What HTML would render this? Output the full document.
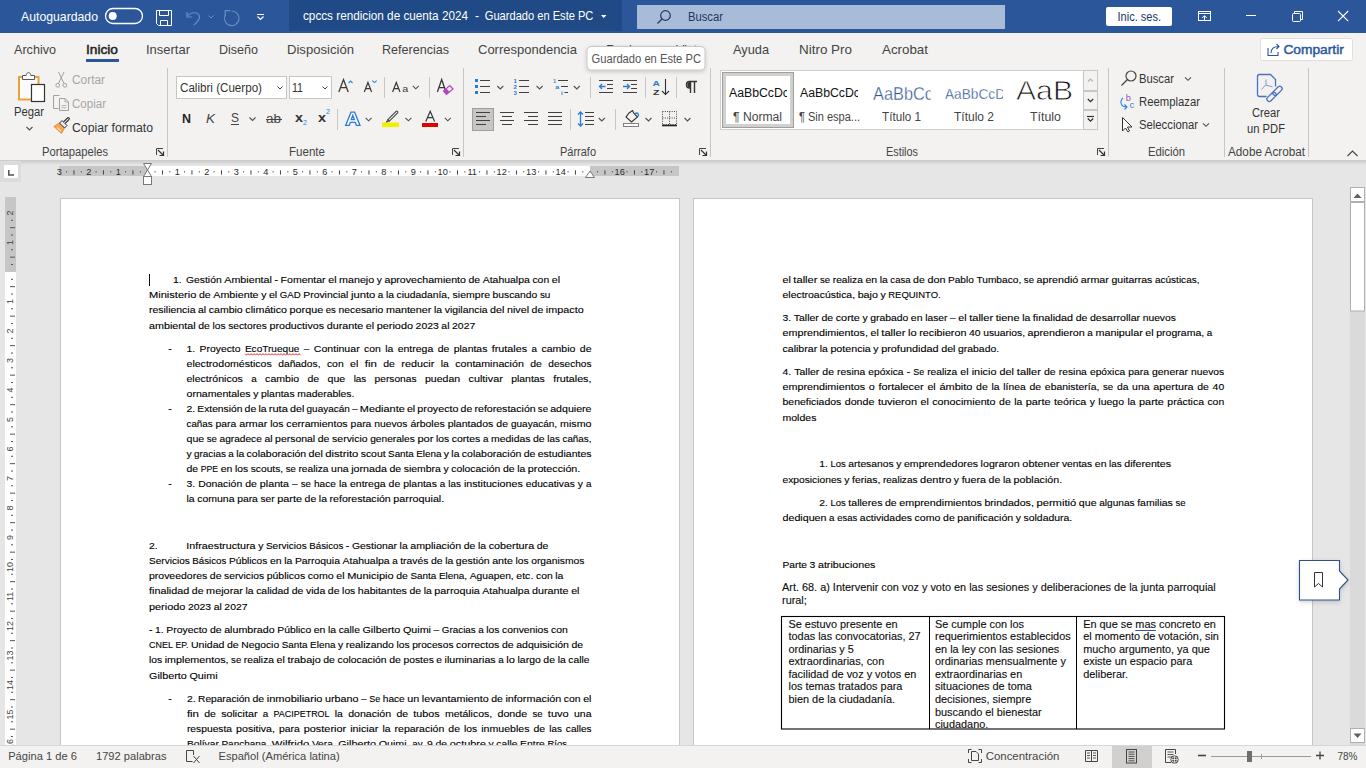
<!DOCTYPE html>
<html><head><meta charset="utf-8"><title>Word</title>
<style>html,body{margin:0;padding:0;width:1366px;height:768px;overflow:hidden;background:#e6e6e6}
svg{display:block;font-family:"Liberation Sans",sans-serif}</style></head>
<body><svg width="1366" height="768" viewBox="0 0 1366 768">
<rect x="0" y="0" width="1366" height="33" fill="#2b579a" />
<text x="21" y="21" font-size="13" fill="#fff" textLength="77" lengthAdjust="spacingAndGlyphs" >Autoguardado</text>
<rect x="105.5" y="8.5" width="37" height="15" rx="7.5" fill="none" stroke="#fff" stroke-width="1.3"/>
<circle cx="112.7" cy="16" r="4" fill="#fff"/>
<path d="M156.5 10.5 H171.5 V25.5 H158.5 L156.5 23.5 Z" stroke="#fff" fill="none" stroke-width="1" />
<path d="M159.5 10.5 V15.5 H168.5 V10.5" stroke="#fff" fill="none" stroke-width="1" />
<path d="M160.5 25.5 V20.5 H167.5 V25.5" stroke="#fff" fill="none" stroke-width="1" />
<path d="M187 12 V17 H192" stroke="#6a8cc0" fill="none" stroke-width="1.2" />
<path d="M187.5 16.5 C190 12 198 11 199.5 16.5 C200 20 196 23 194 25" stroke="#6a8cc0" fill="none" stroke-width="1.2" />
<path d="M208.5 15.5 L211 18 L213.5 15.5" stroke="#6a8cc0" fill="none" stroke-width="1" />
<path d="M231.7 11 A7.3 7.3 0 1 1 225.5 14.5" stroke="#6a8cc0" fill="none" stroke-width="1.2" />
<path d="M225.2 16 V10.6 H230.4" stroke="#6a8cc0" fill="none" stroke-width="1.2" />
<line x1="257" y1="14.5" x2="264" y2="14.5" stroke="#fff" stroke-width="1" />
<path d="M257.5 16.5 L260.5 19.5 L263.5 16.5" stroke="#fff" fill="none" stroke-width="1.2" />
<rect x="289" y="0" width="333" height="31" fill="#1f4a85" />
<text x="303" y="20" font-size="13" fill="#fff" textLength="165" lengthAdjust="spacingAndGlyphs" >cpccs rendicion de cuenta 2024</text>
<text x="475" y="20" font-size="13" fill="#fff" textLength="4" lengthAdjust="spacingAndGlyphs" >-</text>
<text x="484.8" y="20" font-size="13" fill="#fff" textLength="108.6" lengthAdjust="spacingAndGlyphs" >Guardado en Este PC</text>
<path d="M601 15 H606.5 L603.75 18 Z" stroke="none" fill="#fff" stroke-width="1" />
<rect x="637" y="5" width="368" height="24" fill="#a8bcd8" />
<circle cx="665.5" cy="15.5" r="4.8" fill="none" stroke="#1f3763" stroke-width="1.2"/>
<line x1="662" y1="19" x2="657.5" y2="23.5" stroke="#1f3763" stroke-width="1.3" />
<text x="688" y="21" font-size="12" fill="#1f3763" textLength="35" lengthAdjust="spacingAndGlyphs" >Buscar</text>
<rect x="1106" y="7" width="66" height="19" rx="2" fill="#fff"/>
<text x="1117.5" y="21" font-size="12" fill="#203864" textLength="43.5" lengthAdjust="spacingAndGlyphs" >Inic. ses.</text>
<rect x="1198.5" y="11.5" width="12" height="9" fill="none" stroke="#fff" stroke-width="1"/>
<line x1="1198.5" y1="13.5" x2="1210.5" y2="13.5" stroke="#fff" stroke-width="1" />
<path d="M1204.5 20.5 V15.8 M1202.2 18 L1204.5 15.7 L1206.8 18" stroke="#fff" fill="none" stroke-width="1" />
<line x1="1246" y1="15.5" x2="1256" y2="15.5" stroke="#fff" stroke-width="1" />
<rect x="1292.5" y="13.5" width="8" height="8" rx="1" fill="none" stroke="#fff" stroke-width="1"/>
<path d="M1294.5 13.5 V11.5 H1302.5 V19.5 H1300.5" stroke="#fff" fill="none" stroke-width="1" />
<path d="M1338 11 L1348.2 21.2 M1348.2 11 L1338 21.2" stroke="#fff" fill="none" stroke-width="1.1" />
<rect x="0" y="33" width="1366" height="127" fill="#f3f2f1" />
<text x="14" y="54" font-size="13" fill="#444" textLength="42" lengthAdjust="spacingAndGlyphs" >Archivo</text>
<text x="86" y="54" font-size="13" fill="#262626" textLength="32" lengthAdjust="spacingAndGlyphs" stroke="#262626" stroke-width="0.5">Inicio</text>
<text x="146" y="54" font-size="13" fill="#444" textLength="44" lengthAdjust="spacingAndGlyphs" >Insertar</text>
<text x="219" y="54" font-size="13" fill="#444" textLength="39" lengthAdjust="spacingAndGlyphs" >Diseño</text>
<text x="287" y="54" font-size="13" fill="#444" textLength="67" lengthAdjust="spacingAndGlyphs" >Disposición</text>
<text x="382" y="54" font-size="13" fill="#444" textLength="67" lengthAdjust="spacingAndGlyphs" >Referencias</text>
<text x="478" y="54" font-size="13" fill="#444" textLength="99" lengthAdjust="spacingAndGlyphs" >Correspondencia</text>
<text x="606" y="54" font-size="13" fill="#444" textLength="44" lengthAdjust="spacingAndGlyphs" >Revisar</text>
<text x="676" y="54" font-size="13" fill="#444" textLength="28" lengthAdjust="spacingAndGlyphs" >Vista</text>
<text x="733" y="54" font-size="13" fill="#444" textLength="36" lengthAdjust="spacingAndGlyphs" >Ayuda</text>
<text x="799" y="54" font-size="13" fill="#444" textLength="53" lengthAdjust="spacingAndGlyphs" >Nitro Pro</text>
<text x="882" y="54" font-size="13" fill="#444" textLength="46" lengthAdjust="spacingAndGlyphs" >Acrobat</text>
<rect x="86" y="59" width="33" height="3" fill="#2b579a" />
<rect x="1260.5" y="38.5" width="92" height="22" rx="2" fill="#fff" stroke="#e1dfdd"/>
<path d="M1268 48 V55.5 H1278 V52" stroke="#2b579a" fill="none" stroke-width="1.1" />
<path d="M1271 53 C1271 48 1274 46.5 1279 46.5 M1276.5 44 L1279 46.5 L1276.5 49" stroke="#2b579a" fill="none" stroke-width="1.1" />
<text x="1283.4" y="53.5" font-size="12.8" fill="#2b579a" textLength="60.4" lengthAdjust="spacingAndGlyphs" stroke="#2b579a" stroke-width="0.45">Compartir</text>
<defs><filter id="sh" x="-20%" y="-40%" width="140%" height="180%"><feDropShadow dx="0" dy="1.5" stdDeviation="2" flood-color="#000" flood-opacity="0.18"/></filter></defs>
<rect x="587" y="46.5" width="118" height="23.5" rx="4" fill="#fff" stroke="#c8c8c8" stroke-width="1" filter="url(#sh)"/>
<text x="591.5" y="63" font-size="12" fill="#555" textLength="109.5" lengthAdjust="spacingAndGlyphs" >Guardado en Este PC</text>
<line x1="167.5" y1="68" x2="167.5" y2="157" stroke="#c8c6c4" stroke-width="1" />
<line x1="463.5" y1="68" x2="463.5" y2="157" stroke="#c8c6c4" stroke-width="1" />
<line x1="710.5" y1="68" x2="710.5" y2="157" stroke="#c8c6c4" stroke-width="1" />
<line x1="1108.5" y1="68" x2="1108.5" y2="157" stroke="#c8c6c4" stroke-width="1" />
<line x1="1224.5" y1="68" x2="1224.5" y2="157" stroke="#c8c6c4" stroke-width="1" />
<line x1="1308.5" y1="68" x2="1308.5" y2="157" stroke="#c8c6c4" stroke-width="1" />
<text x="42" y="156" font-size="12" fill="#444" textLength="66" lengthAdjust="spacingAndGlyphs" >Portapapeles</text>
<text x="289" y="156" font-size="12" fill="#444" textLength="36" lengthAdjust="spacingAndGlyphs" >Fuente</text>
<text x="560" y="156" font-size="12" fill="#444" textLength="36" lengthAdjust="spacingAndGlyphs" >Párrafo</text>
<text x="886" y="156" font-size="12" fill="#444" textLength="32" lengthAdjust="spacingAndGlyphs" >Estilos</text>
<text x="1148" y="156" font-size="12" fill="#444" textLength="37" lengthAdjust="spacingAndGlyphs" >Edición</text>
<text x="1228" y="156" font-size="12" fill="#444" textLength="77" lengthAdjust="spacingAndGlyphs" >Adobe Acrobat</text>
<path d="M156.5 155 V148.5 H163" stroke="#444" fill="none" stroke-width="1" />
<path d="M158 150 L163 155 M163.5 151.5 V155.5 H159.5" stroke="#333" fill="none" stroke-width="1.2" />
<path d="M452.5 155 V148.5 H459" stroke="#444" fill="none" stroke-width="1" />
<path d="M454 150 L459 155 M459.5 151.5 V155.5 H455.5" stroke="#333" fill="none" stroke-width="1.2" />
<path d="M699.5 155 V148.5 H706" stroke="#444" fill="none" stroke-width="1" />
<path d="M701 150 L706 155 M706.5 151.5 V155.5 H702.5" stroke="#333" fill="none" stroke-width="1.2" />
<path d="M1097.5 155 V148.5 H1104" stroke="#444" fill="none" stroke-width="1" />
<path d="M1099 150 L1104 155 M1104.5 151.5 V155.5 H1100.5" stroke="#333" fill="none" stroke-width="1.2" />
<rect x="19" y="77" width="19.5" height="22.5" fill="#fbfbfb" stroke="#eba13a" stroke-width="2"/>
<path d="M22.5 79.5 V75.5 H26.2 C26.2 71.8 30.8 71.8 30.8 75.5 H34.5 V79.5 Z" stroke="#555" fill="#fff" stroke-width="1" />
<rect x="31.5" y="84.5" width="13" height="17" fill="#fff" stroke="#333" stroke-width="1.2"/>
<text x="14" y="116.4" font-size="12.5" fill="#333" textLength="30" lengthAdjust="spacingAndGlyphs" >Pegar</text>
<path d="M26.5 127 L29.5 130 L32.5 127" stroke="#505050" fill="none" stroke-width="1.1" />
<path d="M58.5 72 L64 83.5 M64 72 L58.5 83.5" stroke="#a0a0a0" fill="none" stroke-width="1" />
<circle cx="57.8" cy="85.3" r="1.9" fill="none" stroke="#a0a0a0"/><circle cx="64.8" cy="85.3" r="1.9" fill="none" stroke="#a0a0a0"/>
<text x="72" y="84" font-size="12" fill="#a6a6a6" textLength="33" lengthAdjust="spacingAndGlyphs" >Cortar</text>
<path d="M59.5 95.5 H53.5 V108.5 H58.5" stroke="#a0a0a0" fill="none" stroke-width="1" />
<path d="M59.5 98.5 H65 L68.5 102 V110.5 H59.5 Z" stroke="#a0a0a0" fill="none" stroke-width="1" />
<path d="M65 98.5 V102 H68.5" stroke="#a0a0a0" fill="none" stroke-width="0.8" />
<line x1="61.5" y1="105.5" x2="66.5" y2="105.5" stroke="#a0a0a0" stroke-width="0.8" />
<line x1="61.5" y1="107.8" x2="66.5" y2="107.8" stroke="#a0a0a0" stroke-width="0.8" />
<text x="72" y="108" font-size="12" fill="#a6a6a6" textLength="34" lengthAdjust="spacingAndGlyphs" >Copiar</text>
<path d="M53.8 126.5 L59.5 123 L64.5 128 L61.5 133.3 Z" stroke="#e0862a" fill="#f6a850" stroke-width="0.9" />
<line x1="57" y1="127.5" x2="61" y2="131.2" stroke="#fff" stroke-width="0.9" />
<path d="M59.5 123 L62 120.5 L67 125.5 L64.5 128 Z" stroke="#333" fill="#e8eef4" stroke-width="1" />
<path d="M63.5 122 L67.5 118 C68.5 117 70 118.5 69 119.5 L65 123.5" stroke="#333" fill="#fff" stroke-width="1.1" />
<text x="72" y="132" font-size="12" fill="#333" textLength="81" lengthAdjust="spacingAndGlyphs" >Copiar formato</text>
<rect x="176.5" y="76.5" width="110" height="22" fill="#fff" stroke="#c8c6c4"/>
<text x="180" y="91.5" font-size="12" fill="#333" textLength="82" lengthAdjust="spacingAndGlyphs" >Calibri (Cuerpo)</text>
<path d="M277.5 86.5 L280 89 L282.5 86.5" stroke="#444" fill="none" stroke-width="1" />
<rect x="289.5" y="76.5" width="42" height="22" fill="#fff" stroke="#c8c6c4"/>
<text x="292" y="91.5" font-size="12" fill="#333" textLength="11" lengthAdjust="spacingAndGlyphs" >11</text>
<path d="M322.5 86.5 L325 89 L327.5 86.5" stroke="#444" fill="none" stroke-width="1" />
<path d="M338.8 92 L343.5 79.6 L348.2 92 M340.43 87.7 H346.57" stroke="#3a3a3a" fill="none" stroke-width="1.3" stroke-linejoin="miter"/>
<path d="M348.6 83 L350.6 81 L352.6 83" stroke="#2b88d8" fill="none" stroke-width="1.1" />
<path d="M364.3 92 L367.95000000000005 82.5 L371.6 92 M365.61 88.6 H370.29" stroke="#3a3a3a" fill="none" stroke-width="1.2" stroke-linejoin="miter"/>
<path d="M372.3 80.6 L374.5 82.6 L376.7 80.6" stroke="#2b88d8" fill="none" stroke-width="1.1" />
<line x1="384.5" y1="77" x2="384.5" y2="98" stroke="#c8c6c4" stroke-width="1" />
<path d="M392.6 92 L396.3 82.5 L400 92 M393.92 88.6 H398.68" stroke="#3a3a3a" fill="none" stroke-width="1.2" stroke-linejoin="miter"/>
<text x="402.3" y="91.9" font-size="9.6" fill="#3a3a3a" textLength="6" lengthAdjust="spacingAndGlyphs" >a</text>
<path d="M412.8 85.8 L415.8 88.8 L418.8 85.8" stroke="#505050" fill="none" stroke-width="1.1" />
<line x1="429.5" y1="77" x2="429.5" y2="98" stroke="#c8c6c4" stroke-width="1" />
<path d="M437.4 92 L441.7 79.6 L446 92 M438.89 87.7 H444.51" stroke="#3a3a3a" fill="none" stroke-width="1.3" stroke-linejoin="miter"/>
<path d="M443.5 91 L449.8 85.6 L453 89 L446.4 94.4 Z" stroke="#b146c2" fill="none" stroke-width="1.2" />
<path d="M443.5 91 L446.5 88.5 L449.6 91.9 L446.4 94.4 Z" stroke="none" fill="#b146c2" stroke-width="1" />
<text x="182" y="123" font-size="13" fill="#262626" textLength="9" lengthAdjust="spacingAndGlyphs" font-weight="bold" >N</text>
<text x="206" y="123" font-size="13" fill="#444" textLength="9" lengthAdjust="spacingAndGlyphs" font-style="italic">K</text>
<text x="231" y="122" font-size="12.5" fill="#444" textLength="8" lengthAdjust="spacingAndGlyphs" >S</text>
<line x1="231" y1="124.5" x2="239" y2="124.5" stroke="#444" stroke-width="1" />
<path d="M249.5 117.5 L252.5 120.5 L255.5 117.5" stroke="#505050" fill="none" stroke-width="1.1" />
<text x="266" y="123" font-size="12" fill="#444" textLength="15" lengthAdjust="spacingAndGlyphs" >ab</text>
<line x1="266" y1="119.5" x2="282" y2="119.5" stroke="#444" stroke-width="1" />
<text x="295" y="122" font-size="13" fill="#333" textLength="8" lengthAdjust="spacingAndGlyphs" font-weight="bold" >x</text>
<text x="303" y="125" font-size="7" fill="#2b88d8" textLength="4" lengthAdjust="spacingAndGlyphs" >2</text>
<text x="318" y="122" font-size="13" fill="#333" textLength="8" lengthAdjust="spacingAndGlyphs" font-weight="bold" >x</text>
<text x="326" y="114" font-size="7" fill="#2b88d8" textLength="4" lengthAdjust="spacingAndGlyphs" >2</text>
<line x1="337.5" y1="109" x2="337.5" y2="130" stroke="#c8c6c4" stroke-width="1" />
<path d="M345.6 125.4 L351 112.2 H354.6 L360 125.4 H356.4 L355.3 122.4 H350.3 L349.2 125.4 Z M351.2 119.6 H354.4 L352.8 115.4 Z" stroke="#2b7cd3" fill="#fff" stroke-width="1.3" fill-rule="evenodd" stroke-linejoin="miter"/>
<path d="M365.6 117.8 L368.6 120.8 L371.6 117.8" stroke="#505050" fill="none" stroke-width="1.1" />
<path d="M388 119.5 L396 111.5 C397 110.5 398.5 112 397.5 113 L389.5 121 Z" stroke="#555" fill="#fff" stroke-width="1.1" />
<path d="M388 119.5 L389.5 121 L386 122.5 Z" stroke="#555" fill="#555" stroke-width="1" />
<rect x="382" y="122.5" width="17" height="4.6" fill="#f0f000" />
<path d="M405.4 117.8 L408.4 120.8 L411.4 117.8" stroke="#505050" fill="none" stroke-width="1.1" />
<path d="M425.8 121.6 L430.20000000000005 111.2 L434.6 121.6 M427.49 117.6 H432.91" stroke="#3a3a3a" fill="none" stroke-width="1.2" stroke-linejoin="miter"/>
<rect x="422" y="123" width="16" height="4" fill="#e00000" />
<path d="M444.8 117.8 L447.8 120.8 L450.8 117.8" stroke="#505050" fill="none" stroke-width="1.1" />
<rect x="475" y="79.0" width="3" height="3" fill="#2b7cd3" />
<line x1="480" y1="80.5" x2="490" y2="80.5" stroke="#404040" stroke-width="1" />
<rect x="475" y="85.0" width="3" height="3" fill="#2b7cd3" />
<line x1="480" y1="86.5" x2="490" y2="86.5" stroke="#404040" stroke-width="1" />
<rect x="475" y="91.0" width="3" height="3" fill="#2b7cd3" />
<line x1="480" y1="92.5" x2="490" y2="92.5" stroke="#404040" stroke-width="1" />
<path d="M497.3 86 L500.3 89 L503.3 86" stroke="#505050" fill="none" stroke-width="1.1" />
<text x="513.6" y="83.3" font-size="5.6" fill="#2b7cd3" textLength="3.4" lengthAdjust="spacingAndGlyphs" font-weight="bold" >1</text>
<line x1="519" y1="80.5" x2="529" y2="80.5" stroke="#404040" stroke-width="1" />
<text x="513.6" y="89.3" font-size="5.6" fill="#2b7cd3" textLength="3.4" lengthAdjust="spacingAndGlyphs" font-weight="bold" >2</text>
<line x1="519" y1="86.5" x2="529" y2="86.5" stroke="#404040" stroke-width="1" />
<text x="513.6" y="95.3" font-size="5.6" fill="#2b7cd3" textLength="3.4" lengthAdjust="spacingAndGlyphs" font-weight="bold" >3</text>
<line x1="519" y1="92.5" x2="529" y2="92.5" stroke="#404040" stroke-width="1" />
<path d="M536.6 86 L539.6 89 L542.6 86" stroke="#505050" fill="none" stroke-width="1.1" />
<text x="553.3" y="82.8" font-size="5.6" fill="#2b7cd3" textLength="2.8" lengthAdjust="spacingAndGlyphs" font-weight="bold" >1</text>
<line x1="558" y1="80.5" x2="568" y2="80.5" stroke="#404040" stroke-width="1" />
<text x="555.2" y="89" font-size="6.2" fill="#2b7cd3" textLength="4" lengthAdjust="spacingAndGlyphs" font-weight="bold" >a</text>
<line x1="561" y1="86.5" x2="568" y2="86.5" stroke="#404040" stroke-width="1" />
<text x="561" y="95" font-size="6" fill="#2b7cd3" textLength="1.8" lengthAdjust="spacingAndGlyphs" font-weight="bold" >i</text>
<line x1="564.5" y1="92.5" x2="568" y2="92.5" stroke="#404040" stroke-width="1" />
<path d="M573.8 86 L576.8 89 L579.8 86" stroke="#505050" fill="none" stroke-width="1.1" />
<line x1="590.5" y1="77" x2="590.5" y2="98" stroke="#c8c6c4" stroke-width="1" />
<line x1="599" y1="80.5" x2="613" y2="80.5" stroke="#404040" stroke-width="1" />
<line x1="607" y1="84.5" x2="613" y2="84.5" stroke="#404040" stroke-width="1" />
<line x1="607" y1="88.5" x2="613" y2="88.5" stroke="#404040" stroke-width="1" />
<line x1="599" y1="92.5" x2="613" y2="92.5" stroke="#404040" stroke-width="1" />
<path d="M599.5 86.5 H605.5 M602 84 L599.5 86.5 L602 89" stroke="#2b7cd3" fill="none" stroke-width="1.3" />
<line x1="623" y1="80.5" x2="637" y2="80.5" stroke="#404040" stroke-width="1" />
<line x1="631" y1="84.5" x2="637" y2="84.5" stroke="#404040" stroke-width="1" />
<line x1="631" y1="88.5" x2="637" y2="88.5" stroke="#404040" stroke-width="1" />
<line x1="623" y1="92.5" x2="637" y2="92.5" stroke="#404040" stroke-width="1" />
<path d="M623 86.5 H629.5 M627 84 L629.5 86.5 L627 89" stroke="#2b7cd3" fill="none" stroke-width="1.3" />
<line x1="645.5" y1="77" x2="645.5" y2="98" stroke="#c8c6c4" stroke-width="1" />
<text x="652.6" y="85.8" font-size="7.6" fill="#2b7cd3" textLength="7.4" lengthAdjust="spacingAndGlyphs" font-weight="bold" >A</text>
<text x="653" y="94.8" font-size="7.6" fill="#333" textLength="6.4" lengthAdjust="spacingAndGlyphs" font-weight="bold" >Z</text>
<path d="M665.5 79 V94.5 M662 91 L665.5 94.5 L669 91" stroke="#333" fill="none" stroke-width="1.1" />
<line x1="676.5" y1="77" x2="676.5" y2="98" stroke="#c8c6c4" stroke-width="1" />
<path d="M690.5 93 V81.5 M694.5 93 V81.5 M697 81.5 H689.5 C685.5 81.5 685.5 88 689.5 88 H690.5" stroke="#333" fill="none" stroke-width="1.4" />
<path d="M690 82 C686.5 82 686.5 87.5 690 87.5 Z" stroke="none" fill="#333" stroke-width="1" />
<rect x="472.5" y="108.5" width="21" height="22" fill="#c8c6c4" stroke="#a19f9d"/>
<line x1="476" y1="112.5" x2="490" y2="112.5" stroke="#404040" stroke-width="1" />
<line x1="500" y1="112.5" x2="514" y2="112.5" stroke="#404040" stroke-width="1" />
<line x1="524" y1="112.5" x2="538" y2="112.5" stroke="#404040" stroke-width="1" />
<line x1="548" y1="112.5" x2="562" y2="112.5" stroke="#404040" stroke-width="1" />
<line x1="476" y1="116.5" x2="486" y2="116.5" stroke="#404040" stroke-width="1" />
<line x1="502" y1="116.5" x2="512" y2="116.5" stroke="#404040" stroke-width="1" />
<line x1="528" y1="116.5" x2="538" y2="116.5" stroke="#404040" stroke-width="1" />
<line x1="548" y1="116.5" x2="562" y2="116.5" stroke="#404040" stroke-width="1" />
<line x1="476" y1="120.5" x2="490" y2="120.5" stroke="#404040" stroke-width="1" />
<line x1="500" y1="120.5" x2="514" y2="120.5" stroke="#404040" stroke-width="1" />
<line x1="524" y1="120.5" x2="538" y2="120.5" stroke="#404040" stroke-width="1" />
<line x1="548" y1="120.5" x2="562" y2="120.5" stroke="#404040" stroke-width="1" />
<line x1="476" y1="124.5" x2="486" y2="124.5" stroke="#404040" stroke-width="1" />
<line x1="502" y1="124.5" x2="512" y2="124.5" stroke="#404040" stroke-width="1" />
<line x1="528" y1="124.5" x2="538" y2="124.5" stroke="#404040" stroke-width="1" />
<line x1="548" y1="124.5" x2="562" y2="124.5" stroke="#404040" stroke-width="1" />
<line x1="570.5" y1="109" x2="570.5" y2="130" stroke="#c8c6c4" stroke-width="1" />
<path d="M580.5 112 V126 M578 114.5 L580.5 112 L583 114.5 M578 123.5 L580.5 126 L583 123.5" stroke="#2b7cd3" fill="none" stroke-width="1.3" />
<line x1="585" y1="112.5" x2="594" y2="112.5" stroke="#404040" stroke-width="1" />
<line x1="585" y1="116.5" x2="594" y2="116.5" stroke="#404040" stroke-width="1" />
<line x1="585" y1="120.5" x2="594" y2="120.5" stroke="#404040" stroke-width="1" />
<line x1="585" y1="124.5" x2="594" y2="124.5" stroke="#404040" stroke-width="1" />
<path d="M598.8 118 L601.8 121 L604.8 118" stroke="#505050" fill="none" stroke-width="1.1" />
<line x1="615.5" y1="109" x2="615.5" y2="130" stroke="#c8c6c4" stroke-width="1" />
<path d="M629 113 L632.5 110.5 L634 113.5 L637.5 117 L631.5 122 L626 117 Z" stroke="#333" fill="none" stroke-width="1.1" />
<path d="M635 114 C637 112 638.5 113 638.5 116.5" stroke="#2b7cd3" fill="none" stroke-width="1.4" />
<rect x="623.5" y="123.5" width="15" height="3" fill="#fff" stroke="#808080"/>
<path d="M645.5 118 L648.5 121 L651.5 118" stroke="#505050" fill="none" stroke-width="1.1" />
<rect x="662.5" y="111.5" width="14" height="13" fill="none" stroke="#444" stroke-width="1" stroke-dasharray="1 1.3"/>
<line x1="662.5" y1="118" x2="676.5" y2="118" stroke="#444" stroke-width="1" stroke-dasharray="1 1.3"/>
<line x1="669.5" y1="111.5" x2="669.5" y2="124.5" stroke="#444" stroke-width="1" stroke-dasharray="1 1.3"/>
<line x1="662" y1="125.5" x2="677" y2="125.5" stroke="#222" stroke-width="1.6" />
<path d="M684.5 118 L687.5 121 L690.5 118" stroke="#505050" fill="none" stroke-width="1.1" />
<defs><clipPath id="cs0"><rect x="725" y="72" width="62" height="40"/></clipPath><clipPath id="cs4"><rect x="795" y="72" width="63" height="40"/></clipPath><clipPath id="cs1"><rect x="865" y="72" width="65.5" height="40"/></clipPath><clipPath id="cs2"><rect x="938" y="72" width="65" height="40"/></clipPath><clipPath id="cs3"><rect x="1010" y="79.5" width="70" height="40"/></clipPath></defs>
<rect x="720.5" y="70.5" width="377" height="59" fill="#fff" stroke="#d2d0ce"/>
<rect x="722.5" y="72.5" width="71" height="55" fill="#fff" stroke="#a19f9d" stroke-width="1"/>
<rect x="724.5" y="74.5" width="67" height="51" fill="none" stroke="#d0d0d0" stroke-width="3"/>
<text x="729" y="97" font-size="12" fill="#111" textLength="60" lengthAdjust="spacingAndGlyphs" clip-path="url(#cs0)">AaBbCcDc</text>
<text x="733" y="121" font-size="12" fill="#444" textLength="49" lengthAdjust="spacingAndGlyphs" >¶ Normal</text>
<text x="800" y="97" font-size="12" fill="#111" textLength="60" lengthAdjust="spacingAndGlyphs" clip-path="url(#cs4)">AaBbCcDc</text>
<text x="799" y="121" font-size="12" fill="#444" textLength="61" lengthAdjust="spacingAndGlyphs" >¶ Sin espa...</text>
<text x="873" y="99.5" font-size="17.5" fill="#2f5496" textLength="60" lengthAdjust="spacingAndGlyphs" stroke="#fff" stroke-width="0.35" clip-path="url(#cs1)">AaBbCc</text>
<text x="882" y="121" font-size="12" fill="#444" textLength="39" lengthAdjust="spacingAndGlyphs" >Título 1</text>
<text x="945" y="99" font-size="15" fill="#2f5496" textLength="60" lengthAdjust="spacingAndGlyphs" stroke="#fff" stroke-width="0.3" clip-path="url(#cs2)">AaBbCcD</text>
<text x="954" y="121" font-size="12" fill="#444" textLength="40" lengthAdjust="spacingAndGlyphs" >Título 2</text>
<text x="1016" y="99.5" font-size="28" fill="#111" textLength="57" lengthAdjust="spacingAndGlyphs" stroke="#fff" stroke-width="0.8" clip-path="url(#cs3)">AaB</text>
<text x="1030" y="121" font-size="12" fill="#444" textLength="31" lengthAdjust="spacingAndGlyphs" >Título</text>
<rect x="1083.5" y="70.5" width="14" height="20" fill="#f3f2f1" stroke="#c8c6c4"/>
<rect x="1083.5" y="91.5" width="14" height="18" fill="#f3f2f1" stroke="#c8c6c4"/>
<rect x="1083.5" y="110.5" width="14" height="19" fill="#f3f2f1" stroke="#c8c6c4"/>
<path d="M1088 81.5 L1090.5 79 L1093 81.5" stroke="#b0b0b0" fill="none" stroke-width="1.1" />
<path d="M1087.8 99 L1090.5 101.7 L1093.2 99" stroke="#333" fill="none" stroke-width="1.3" />
<line x1="1087" y1="116.5" x2="1094" y2="116.5" stroke="#333" stroke-width="1.2" />
<path d="M1087.8 118.5 L1090.5 121.2 L1093.2 118.5" stroke="#333" fill="none" stroke-width="1.3" />
<circle cx="1131" cy="76" r="5" fill="none" stroke="#444" stroke-width="1.2"/>
<line x1="1127.5" y1="79.5" x2="1121.5" y2="85.5" stroke="#444" stroke-width="1.3" />
<text x="1139" y="83" font-size="12" fill="#333" textLength="35" lengthAdjust="spacingAndGlyphs" >Buscar</text>
<path d="M1185 77.3 L1188 80.3 L1191 77.3" stroke="#505050" fill="none" stroke-width="1.1" />
<text x="1125.8" y="100.6" font-size="9.5" fill="#9b4fc6" textLength="5.2" lengthAdjust="spacingAndGlyphs" >b</text>
<text x="1129.5" y="108.2" font-size="9.5" fill="#2b88d8" textLength="4.8" lengthAdjust="spacingAndGlyphs" >c</text>
<path d="M1123 98 C1119 102 1121 107 1127 107 M1124.5 104.5 L1127 107 L1124.5 109.5" stroke="#2b88d8" fill="none" stroke-width="1.1" />
<text x="1139" y="106" font-size="12" fill="#333" textLength="61" lengthAdjust="spacingAndGlyphs" >Reemplazar</text>
<path d="M1122.5 117.5 V131 L1125.5 128 L1128 132 L1129.5 131 L1127.5 127 H1132 Z" stroke="#333" fill="#fff" stroke-width="1" />
<text x="1139" y="129" font-size="12" fill="#333" textLength="59" lengthAdjust="spacingAndGlyphs" >Seleccionar</text>
<path d="M1203 123.3 L1206 126.3 L1209 123.3" stroke="#505050" fill="none" stroke-width="1.1" />
<path d="M1275.5 86.5 V79.5 L1270.5 74.5 H1259.5 Q1257.5 74.5 1257.5 76.5 V94.5 Q1257.5 96.5 1259.5 96.5 H1266.5" stroke="#4a72c0" fill="none" stroke-width="1.3" />
<path d="M1266 79.5 V84.5 L1261.5 89.5 M1265.5 85 L1272.5 86.8" stroke="#7090d0" fill="none" stroke-width="0.9" />
<rect x="1266" y="94.5" width="11" height="4.8" rx="2.4" fill="none" stroke="#4a72c0" stroke-width="1.3" transform="rotate(-45 1271.5 96.9)"/>
<rect x="1272" y="88.5" width="11" height="4.8" rx="2.4" fill="none" stroke="#4a72c0" stroke-width="1.3" transform="rotate(-45 1277.5 90.9)"/>
<text x="1252" y="117" font-size="12" fill="#333" textLength="28" lengthAdjust="spacingAndGlyphs" >Crear</text>
<text x="1247" y="132.5" font-size="12" fill="#333" textLength="38" lengthAdjust="spacingAndGlyphs" >un PDF</text>
<path d="M1347.5 156 L1352.5 151 L1357.5 156" stroke="#444" fill="none" stroke-width="1.1" />
<rect x="0" y="160" width="1366" height="585" fill="#e6e6e6" />
<defs><linearGradient id="rsh" x1="0" y1="0" x2="0" y2="1"><stop offset="0" stop-color="#c9c9c9"/><stop offset="1" stop-color="#e6e6e6"/></linearGradient></defs>
<rect x="0" y="160" width="1366" height="5" fill="url(#rsh)" />
<rect x="0" y="161" width="21" height="21" fill="#dcdcdc"/>
<rect x="4" y="165" width="14" height="13" fill="#fff" />
<path d="M8.8 170 V175 H14" stroke="#505050" fill="none" stroke-width="1.5" />
<rect x="59" y="166" width="620" height="10" fill="#c6c6c6" />
<rect x="148" y="166" width="442" height="10" fill="#fff" />
<text x="59.19999999999999" y="174.6" font-size="9.2" fill="#2a2a2a" text-anchor="middle" >3</text>
<rect x="66.07499999999999" y="171.2" width="1" height="1.2" fill="#444" />
<rect x="73.44999999999999" y="170.3" width="1" height="4.3" fill="#444" />
<rect x="80.82499999999999" y="171.2" width="1" height="1.2" fill="#444" />
<text x="88.69999999999999" y="174.6" font-size="9.2" fill="#2a2a2a" text-anchor="middle" >2</text>
<rect x="95.57499999999999" y="171.2" width="1" height="1.2" fill="#444" />
<rect x="102.94999999999999" y="170.3" width="1" height="4.3" fill="#444" />
<rect x="110.32499999999999" y="171.2" width="1" height="1.2" fill="#444" />
<text x="118.19999999999999" y="174.6" font-size="9.2" fill="#2a2a2a" text-anchor="middle" >1</text>
<rect x="125.07499999999999" y="171.2" width="1" height="1.2" fill="#444" />
<rect x="132.45" y="170.3" width="1" height="4.3" fill="#444" />
<rect x="139.825" y="171.2" width="1" height="1.2" fill="#444" />
<rect x="154.575" y="171.2" width="1" height="1.2" fill="#444" />
<rect x="161.95" y="170.3" width="1" height="4.3" fill="#444" />
<rect x="169.325" y="171.2" width="1" height="1.2" fill="#444" />
<text x="177.2" y="174.6" font-size="9.2" fill="#2a2a2a" text-anchor="middle" >1</text>
<rect x="184.075" y="171.2" width="1" height="1.2" fill="#444" />
<rect x="191.45" y="170.3" width="1" height="4.3" fill="#444" />
<rect x="198.825" y="171.2" width="1" height="1.2" fill="#444" />
<text x="206.7" y="174.6" font-size="9.2" fill="#2a2a2a" text-anchor="middle" >2</text>
<rect x="213.575" y="171.2" width="1" height="1.2" fill="#444" />
<rect x="220.95" y="170.3" width="1" height="4.3" fill="#444" />
<rect x="228.325" y="171.2" width="1" height="1.2" fill="#444" />
<text x="236.2" y="174.6" font-size="9.2" fill="#2a2a2a" text-anchor="middle" >3</text>
<rect x="243.075" y="171.2" width="1" height="1.2" fill="#444" />
<rect x="250.45" y="170.3" width="1" height="4.3" fill="#444" />
<rect x="257.825" y="171.2" width="1" height="1.2" fill="#444" />
<text x="265.7" y="174.6" font-size="9.2" fill="#2a2a2a" text-anchor="middle" >4</text>
<rect x="272.575" y="171.2" width="1" height="1.2" fill="#444" />
<rect x="279.95" y="170.3" width="1" height="4.3" fill="#444" />
<rect x="287.325" y="171.2" width="1" height="1.2" fill="#444" />
<text x="295.2" y="174.6" font-size="9.2" fill="#2a2a2a" text-anchor="middle" >5</text>
<rect x="302.075" y="171.2" width="1" height="1.2" fill="#444" />
<rect x="309.45" y="170.3" width="1" height="4.3" fill="#444" />
<rect x="316.825" y="171.2" width="1" height="1.2" fill="#444" />
<text x="324.7" y="174.6" font-size="9.2" fill="#2a2a2a" text-anchor="middle" >6</text>
<rect x="331.575" y="171.2" width="1" height="1.2" fill="#444" />
<rect x="338.95" y="170.3" width="1" height="4.3" fill="#444" />
<rect x="346.325" y="171.2" width="1" height="1.2" fill="#444" />
<text x="354.2" y="174.6" font-size="9.2" fill="#2a2a2a" text-anchor="middle" >7</text>
<rect x="361.075" y="171.2" width="1" height="1.2" fill="#444" />
<rect x="368.45" y="170.3" width="1" height="4.3" fill="#444" />
<rect x="375.825" y="171.2" width="1" height="1.2" fill="#444" />
<text x="383.7" y="174.6" font-size="9.2" fill="#2a2a2a" text-anchor="middle" >8</text>
<rect x="390.575" y="171.2" width="1" height="1.2" fill="#444" />
<rect x="397.95" y="170.3" width="1" height="4.3" fill="#444" />
<rect x="405.325" y="171.2" width="1" height="1.2" fill="#444" />
<text x="413.2" y="174.6" font-size="9.2" fill="#2a2a2a" text-anchor="middle" >9</text>
<rect x="420.075" y="171.2" width="1" height="1.2" fill="#444" />
<rect x="427.45" y="170.3" width="1" height="4.3" fill="#444" />
<rect x="434.825" y="171.2" width="1" height="1.2" fill="#444" />
<text x="442.7" y="174.6" font-size="9.2" fill="#2a2a2a" text-anchor="middle" >10</text>
<rect x="449.575" y="171.2" width="1" height="1.2" fill="#444" />
<rect x="456.95" y="170.3" width="1" height="4.3" fill="#444" />
<rect x="464.325" y="171.2" width="1" height="1.2" fill="#444" />
<text x="472.2" y="174.6" font-size="9.2" fill="#2a2a2a" text-anchor="middle" >11</text>
<rect x="479.075" y="171.2" width="1" height="1.2" fill="#444" />
<rect x="486.45" y="170.3" width="1" height="4.3" fill="#444" />
<rect x="493.825" y="171.2" width="1" height="1.2" fill="#444" />
<text x="501.7" y="174.6" font-size="9.2" fill="#2a2a2a" text-anchor="middle" >12</text>
<rect x="508.575" y="171.2" width="1" height="1.2" fill="#444" />
<rect x="515.95" y="170.3" width="1" height="4.3" fill="#444" />
<rect x="523.325" y="171.2" width="1" height="1.2" fill="#444" />
<text x="531.2" y="174.6" font-size="9.2" fill="#2a2a2a" text-anchor="middle" >13</text>
<rect x="538.075" y="171.2" width="1" height="1.2" fill="#444" />
<rect x="545.45" y="170.3" width="1" height="4.3" fill="#444" />
<rect x="552.825" y="171.2" width="1" height="1.2" fill="#444" />
<text x="560.7" y="174.6" font-size="9.2" fill="#2a2a2a" text-anchor="middle" >14</text>
<rect x="567.575" y="171.2" width="1" height="1.2" fill="#444" />
<rect x="574.95" y="170.3" width="1" height="4.3" fill="#444" />
<rect x="582.325" y="171.2" width="1" height="1.2" fill="#444" />
<rect x="597.075" y="171.2" width="1" height="1.2" fill="#444" />
<rect x="604.45" y="170.3" width="1" height="4.3" fill="#444" />
<rect x="611.825" y="171.2" width="1" height="1.2" fill="#444" />
<text x="619.7" y="174.6" font-size="9.2" fill="#2a2a2a" text-anchor="middle" >16</text>
<rect x="626.575" y="171.2" width="1" height="1.2" fill="#444" />
<rect x="633.95" y="170.3" width="1" height="4.3" fill="#444" />
<rect x="641.325" y="171.2" width="1" height="1.2" fill="#444" />
<text x="649.2" y="174.6" font-size="9.2" fill="#2a2a2a" text-anchor="middle" >17</text>
<rect x="656.075" y="171.2" width="1" height="1.2" fill="#444" />
<rect x="663.45" y="170.3" width="1" height="4.3" fill="#444" />
<rect x="670.825" y="171.2" width="1" height="1.2" fill="#444" />
<path d="M143.5 163.5 H151.5 L147.5 170 L151.5 176.5 H143.5 L147.5 170 Z" stroke="#777" fill="#fff" stroke-width="1" />
<rect x="143.5" y="176.5" width="8" height="8" fill="#fff" stroke="#777"/>
<path d="M585.5 177.5 L590 171 L594.5 177.5 Z" stroke="#777" fill="#fff" stroke-width="1" />
<rect x="5" y="197" width="11" height="548" fill="#fff" />
<rect x="5" y="197" width="11" height="75" fill="#c6c6c6" />
<text x="10.5" y="212.89999999999998" font-size="9" fill="#444" text-anchor="middle" transform="rotate(-90 10.5 212.89999999999998)" dy="3">2</text>
<rect x="11" y="219.77499999999998" width="2" height="1" fill="#555" />
<rect x="10" y="227.14999999999998" width="5" height="1" fill="#555" />
<rect x="11" y="234.52499999999998" width="2" height="1" fill="#555" />
<text x="10.5" y="242.39999999999998" font-size="9" fill="#444" text-anchor="middle" transform="rotate(-90 10.5 242.39999999999998)" dy="3">1</text>
<rect x="11" y="249.27499999999998" width="2" height="1" fill="#555" />
<rect x="10" y="256.65" width="5" height="1" fill="#555" />
<rect x="11" y="264.025" width="2" height="1" fill="#555" />
<rect x="11" y="278.775" width="2" height="1" fill="#555" />
<rect x="10" y="286.15" width="5" height="1" fill="#555" />
<rect x="11" y="293.525" width="2" height="1" fill="#555" />
<text x="10.5" y="301.4" font-size="9" fill="#444" text-anchor="middle" transform="rotate(-90 10.5 301.4)" dy="3">1</text>
<rect x="11" y="308.275" width="2" height="1" fill="#555" />
<rect x="10" y="315.65" width="5" height="1" fill="#555" />
<rect x="11" y="323.025" width="2" height="1" fill="#555" />
<text x="10.5" y="330.9" font-size="9" fill="#444" text-anchor="middle" transform="rotate(-90 10.5 330.9)" dy="3">2</text>
<rect x="11" y="337.775" width="2" height="1" fill="#555" />
<rect x="10" y="345.15" width="5" height="1" fill="#555" />
<rect x="11" y="352.525" width="2" height="1" fill="#555" />
<text x="10.5" y="360.4" font-size="9" fill="#444" text-anchor="middle" transform="rotate(-90 10.5 360.4)" dy="3">3</text>
<rect x="11" y="367.275" width="2" height="1" fill="#555" />
<rect x="10" y="374.65" width="5" height="1" fill="#555" />
<rect x="11" y="382.025" width="2" height="1" fill="#555" />
<text x="10.5" y="389.9" font-size="9" fill="#444" text-anchor="middle" transform="rotate(-90 10.5 389.9)" dy="3">4</text>
<rect x="11" y="396.775" width="2" height="1" fill="#555" />
<rect x="10" y="404.15" width="5" height="1" fill="#555" />
<rect x="11" y="411.525" width="2" height="1" fill="#555" />
<text x="10.5" y="419.4" font-size="9" fill="#444" text-anchor="middle" transform="rotate(-90 10.5 419.4)" dy="3">5</text>
<rect x="11" y="426.275" width="2" height="1" fill="#555" />
<rect x="10" y="433.65" width="5" height="1" fill="#555" />
<rect x="11" y="441.025" width="2" height="1" fill="#555" />
<text x="10.5" y="448.9" font-size="9" fill="#444" text-anchor="middle" transform="rotate(-90 10.5 448.9)" dy="3">6</text>
<rect x="11" y="455.775" width="2" height="1" fill="#555" />
<rect x="10" y="463.15" width="5" height="1" fill="#555" />
<rect x="11" y="470.525" width="2" height="1" fill="#555" />
<text x="10.5" y="478.4" font-size="9" fill="#444" text-anchor="middle" transform="rotate(-90 10.5 478.4)" dy="3">7</text>
<rect x="11" y="485.275" width="2" height="1" fill="#555" />
<rect x="10" y="492.65" width="5" height="1" fill="#555" />
<rect x="11" y="500.025" width="2" height="1" fill="#555" />
<text x="10.5" y="507.9" font-size="9" fill="#444" text-anchor="middle" transform="rotate(-90 10.5 507.9)" dy="3">8</text>
<rect x="11" y="514.775" width="2" height="1" fill="#555" />
<rect x="10" y="522.15" width="5" height="1" fill="#555" />
<rect x="11" y="529.525" width="2" height="1" fill="#555" />
<text x="10.5" y="537.4" font-size="9" fill="#444" text-anchor="middle" transform="rotate(-90 10.5 537.4)" dy="3">9</text>
<rect x="11" y="544.275" width="2" height="1" fill="#555" />
<rect x="10" y="551.65" width="5" height="1" fill="#555" />
<rect x="11" y="559.025" width="2" height="1" fill="#555" />
<text x="10.5" y="566.9" font-size="9" fill="#444" text-anchor="middle" transform="rotate(-90 10.5 566.9)" dy="3">10</text>
<rect x="11" y="573.775" width="2" height="1" fill="#555" />
<rect x="10" y="581.15" width="5" height="1" fill="#555" />
<rect x="11" y="588.525" width="2" height="1" fill="#555" />
<text x="10.5" y="596.4" font-size="9" fill="#444" text-anchor="middle" transform="rotate(-90 10.5 596.4)" dy="3">11</text>
<rect x="11" y="603.275" width="2" height="1" fill="#555" />
<rect x="10" y="610.65" width="5" height="1" fill="#555" />
<rect x="11" y="618.025" width="2" height="1" fill="#555" />
<text x="10.5" y="625.9" font-size="9" fill="#444" text-anchor="middle" transform="rotate(-90 10.5 625.9)" dy="3">12</text>
<rect x="11" y="632.775" width="2" height="1" fill="#555" />
<rect x="10" y="640.15" width="5" height="1" fill="#555" />
<rect x="11" y="647.525" width="2" height="1" fill="#555" />
<text x="10.5" y="655.4" font-size="9" fill="#444" text-anchor="middle" transform="rotate(-90 10.5 655.4)" dy="3">13</text>
<rect x="11" y="662.275" width="2" height="1" fill="#555" />
<rect x="10" y="669.65" width="5" height="1" fill="#555" />
<rect x="11" y="677.025" width="2" height="1" fill="#555" />
<text x="10.5" y="684.9" font-size="9" fill="#444" text-anchor="middle" transform="rotate(-90 10.5 684.9)" dy="3">14</text>
<rect x="11" y="691.775" width="2" height="1" fill="#555" />
<rect x="10" y="699.15" width="5" height="1" fill="#555" />
<rect x="11" y="706.525" width="2" height="1" fill="#555" />
<text x="10.5" y="714.4" font-size="9" fill="#444" text-anchor="middle" transform="rotate(-90 10.5 714.4)" dy="3">15</text>
<rect x="11" y="721.275" width="2" height="1" fill="#555" />
<rect x="10" y="728.65" width="5" height="1" fill="#555" />
<rect x="11" y="736.025" width="2" height="1" fill="#555" />
<text x="10.5" y="743.9" font-size="9" fill="#444" text-anchor="middle" transform="rotate(-90 10.5 743.9)" dy="3">16</text>
<rect x="60.5" y="198.5" width="619" height="560" fill="#fff" stroke="#c6c6c6"/>
<rect x="693.5" y="198.5" width="619" height="560" fill="#fff" stroke="#c6c6c6"/>
<line x1="149.5" y1="274" x2="149.5" y2="286" stroke="#000" stroke-width="1" />
<text x="173" y="283" font-size="9.4" fill="#000" textLength="8.68" lengthAdjust="spacingAndGlyphs" stroke="#000" stroke-width="0.12">1.</text>
<text x="186" y="283" font-size="9.4" fill="#000" textLength="35.64" lengthAdjust="spacingAndGlyphs" stroke="#000" stroke-width="0.12">Gestión</text>
<text x="224.22" y="283" font-size="9.4" fill="#000" textLength="47.75" lengthAdjust="spacingAndGlyphs" stroke="#000" stroke-width="0.12">Ambiental</text>
<text x="274.55" y="283" font-size="9.4" fill="#000" textLength="3.5" lengthAdjust="spacingAndGlyphs" stroke="#000" stroke-width="0.12">-</text>
<text x="280.64" y="283" font-size="9.4" fill="#000" textLength="44.99" lengthAdjust="spacingAndGlyphs" stroke="#000" stroke-width="0.12">Fomentar</text>
<text x="328.21" y="283" font-size="9.4" fill="#000" textLength="8.31" lengthAdjust="spacingAndGlyphs" stroke="#000" stroke-width="0.12">el</text>
<text x="339.11" y="283" font-size="9.4" fill="#000" textLength="35.06" lengthAdjust="spacingAndGlyphs" stroke="#000" stroke-width="0.12">manejo</text>
<text x="376.75" y="283" font-size="9.4" fill="#000" textLength="5.17" lengthAdjust="spacingAndGlyphs" stroke="#000" stroke-width="0.12">y</text>
<text x="384.51" y="283" font-size="9.4" fill="#000" textLength="81.39" lengthAdjust="spacingAndGlyphs" stroke="#000" stroke-width="0.12">aprovechamiento</text>
<text x="468.49" y="283" font-size="9.4" fill="#000" textLength="11.69" lengthAdjust="spacingAndGlyphs" stroke="#000" stroke-width="0.12">de</text>
<text x="482.76" y="283" font-size="9.4" fill="#000" textLength="47.08" lengthAdjust="spacingAndGlyphs" stroke="#000" stroke-width="0.12">Atahualpa</text>
<text x="532.42" y="283" font-size="9.4" fill="#000" textLength="16.77" lengthAdjust="spacingAndGlyphs" stroke="#000" stroke-width="0.12">con</text>
<text x="551.78" y="283" font-size="9.4" fill="#000" textLength="8.31" lengthAdjust="spacingAndGlyphs" stroke="#000" stroke-width="0.12">el</text>
<text x="149" y="298" font-size="9.4" fill="#000" textLength="47.39" lengthAdjust="spacingAndGlyphs" stroke="#000" stroke-width="0.12">Ministerio</text>
<text x="198.98" y="298" font-size="9.4" fill="#000" textLength="11.69" lengthAdjust="spacingAndGlyphs" stroke="#000" stroke-width="0.12">de</text>
<text x="213.26" y="298" font-size="9.4" fill="#000" textLength="45.35" lengthAdjust="spacingAndGlyphs" stroke="#000" stroke-width="0.12">Ambiente</text>
<text x="261.19" y="298" font-size="9.4" fill="#000" textLength="5.17" lengthAdjust="spacingAndGlyphs" stroke="#000" stroke-width="0.12">y</text>
<text x="268.95" y="298" font-size="9.4" fill="#000" textLength="8.31" lengthAdjust="spacingAndGlyphs" stroke="#000" stroke-width="0.12">el</text>
<text x="279.84" y="298" font-size="9.4" fill="#000" textLength="20.86" lengthAdjust="spacingAndGlyphs" stroke="#000" stroke-width="0.12">GAD</text>
<text x="303.28" y="298" font-size="9.4" fill="#000" textLength="45.03" lengthAdjust="spacingAndGlyphs" stroke="#000" stroke-width="0.12">Provincial</text>
<text x="350.9" y="298" font-size="9.4" fill="#000" textLength="24.38" lengthAdjust="spacingAndGlyphs" stroke="#000" stroke-width="0.12">junto</text>
<text x="377.86" y="298" font-size="9.4" fill="#000" textLength="5.47" lengthAdjust="spacingAndGlyphs" stroke="#000" stroke-width="0.12">a</text>
<text x="385.92" y="298" font-size="9.4" fill="#000" textLength="8.1" lengthAdjust="spacingAndGlyphs" stroke="#000" stroke-width="0.12">la</text>
<text x="396.61" y="298" font-size="9.4" fill="#000" textLength="53.38" lengthAdjust="spacingAndGlyphs" stroke="#000" stroke-width="0.12">ciudadanía,</text>
<text x="452.57" y="298" font-size="9.4" fill="#000" textLength="37.44" lengthAdjust="spacingAndGlyphs" stroke="#000" stroke-width="0.12">siempre</text>
<text x="492.59" y="298" font-size="9.4" fill="#000" textLength="44.73" lengthAdjust="spacingAndGlyphs" stroke="#000" stroke-width="0.12">buscando</text>
<text x="539.91" y="298" font-size="9.4" fill="#000" textLength="10.48" lengthAdjust="spacingAndGlyphs" stroke="#000" stroke-width="0.12">su</text>
<text x="149" y="313" font-size="9.4" fill="#000" textLength="46.49" lengthAdjust="spacingAndGlyphs" stroke="#000" stroke-width="0.12">resiliencia</text>
<text x="198.07" y="313" font-size="9.4" fill="#000" textLength="8.1" lengthAdjust="spacingAndGlyphs" stroke="#000" stroke-width="0.12">al</text>
<text x="208.75" y="313" font-size="9.4" fill="#000" textLength="34.0" lengthAdjust="spacingAndGlyphs" stroke="#000" stroke-width="0.12">cambio</text>
<text x="245.34" y="313" font-size="9.4" fill="#000" textLength="41.71" lengthAdjust="spacingAndGlyphs" stroke="#000" stroke-width="0.12">climático</text>
<text x="289.63" y="313" font-size="9.4" fill="#000" textLength="33.56" lengthAdjust="spacingAndGlyphs" stroke="#000" stroke-width="0.12">porque</text>
<text x="325.78" y="313" font-size="9.4" fill="#000" textLength="10.16" lengthAdjust="spacingAndGlyphs" stroke="#000" stroke-width="0.12">es</text>
<text x="338.52" y="313" font-size="9.4" fill="#000" textLength="44.79" lengthAdjust="spacingAndGlyphs" stroke="#000" stroke-width="0.12">necesario</text>
<text x="385.9" y="313" font-size="9.4" fill="#000" textLength="45.58" lengthAdjust="spacingAndGlyphs" stroke="#000" stroke-width="0.12">mantener</text>
<text x="434.05" y="313" font-size="9.4" fill="#000" textLength="8.1" lengthAdjust="spacingAndGlyphs" stroke="#000" stroke-width="0.12">la</text>
<text x="444.74" y="313" font-size="9.4" fill="#000" textLength="42.82" lengthAdjust="spacingAndGlyphs" stroke="#000" stroke-width="0.12">vigilancia</text>
<text x="490.14" y="313" font-size="9.4" fill="#000" textLength="14.32" lengthAdjust="spacingAndGlyphs" stroke="#000" stroke-width="0.12">del</text>
<text x="507.04" y="313" font-size="9.4" fill="#000" textLength="21.99" lengthAdjust="spacingAndGlyphs" stroke="#000" stroke-width="0.12">nivel</text>
<text x="531.62" y="313" font-size="9.4" fill="#000" textLength="11.69" lengthAdjust="spacingAndGlyphs" stroke="#000" stroke-width="0.12">de</text>
<text x="545.89" y="313" font-size="9.4" fill="#000" textLength="37.81" lengthAdjust="spacingAndGlyphs" stroke="#000" stroke-width="0.12">impacto</text>
<text x="149" y="328.5" font-size="9.4" fill="#000" textLength="46.61" lengthAdjust="spacingAndGlyphs" stroke="#000" stroke-width="0.12">ambiental</text>
<text x="198.19" y="328.5" font-size="9.4" fill="#000" textLength="11.69" lengthAdjust="spacingAndGlyphs" stroke="#000" stroke-width="0.12">de</text>
<text x="212.47" y="328.5" font-size="9.4" fill="#000" textLength="13.12" lengthAdjust="spacingAndGlyphs" stroke="#000" stroke-width="0.12">los</text>
<text x="228.17" y="328.5" font-size="9.4" fill="#000" textLength="38.73" lengthAdjust="spacingAndGlyphs" stroke="#000" stroke-width="0.12">sectores</text>
<text x="269.48" y="328.5" font-size="9.4" fill="#000" textLength="54.6" lengthAdjust="spacingAndGlyphs" stroke="#000" stroke-width="0.12">productivos</text>
<text x="326.67" y="328.5" font-size="9.4" fill="#000" textLength="36.53" lengthAdjust="spacingAndGlyphs" stroke="#000" stroke-width="0.12">durante</text>
<text x="365.78" y="328.5" font-size="9.4" fill="#000" textLength="8.31" lengthAdjust="spacingAndGlyphs" stroke="#000" stroke-width="0.12">el</text>
<text x="376.67" y="328.5" font-size="9.4" fill="#000" textLength="36.36" lengthAdjust="spacingAndGlyphs" stroke="#000" stroke-width="0.12">periodo</text>
<text x="415.62" y="328.5" font-size="9.4" fill="#000" textLength="23.17" lengthAdjust="spacingAndGlyphs" stroke="#000" stroke-width="0.12">2023</text>
<text x="441.38" y="328.5" font-size="9.4" fill="#000" textLength="8.1" lengthAdjust="spacingAndGlyphs" stroke="#000" stroke-width="0.12">al</text>
<text x="452.06" y="328.5" font-size="9.4" fill="#000" textLength="23.17" lengthAdjust="spacingAndGlyphs" stroke="#000" stroke-width="0.12">2027</text>
<text x="186.5" y="351.7" font-size="9.4" fill="#000" textLength="8.68" lengthAdjust="spacingAndGlyphs" stroke="#000" stroke-width="0.12">1.</text>
<text x="199.56" y="351.7" font-size="9.4" fill="#000" textLength="40.97" lengthAdjust="spacingAndGlyphs" stroke="#000" stroke-width="0.12">Proyecto</text>
<text x="244.92" y="351.7" font-size="9.4" fill="#000" textLength="54.43" lengthAdjust="spacingAndGlyphs" stroke="#000" stroke-width="0.12">EcoTrueque</text>
<text x="303.73" y="351.7" font-size="9.4" fill="#000" textLength="5.69" lengthAdjust="spacingAndGlyphs" stroke="#000" stroke-width="0.12">–</text>
<text x="313.81" y="351.7" font-size="9.4" fill="#000" textLength="45.86" lengthAdjust="spacingAndGlyphs" stroke="#000" stroke-width="0.12">Continuar</text>
<text x="364.05" y="351.7" font-size="9.4" fill="#000" textLength="16.77" lengthAdjust="spacingAndGlyphs" stroke="#000" stroke-width="0.12">con</text>
<text x="385.21" y="351.7" font-size="9.4" fill="#000" textLength="8.1" lengthAdjust="spacingAndGlyphs" stroke="#000" stroke-width="0.12">la</text>
<text x="397.69" y="351.7" font-size="9.4" fill="#000" textLength="35.58" lengthAdjust="spacingAndGlyphs" stroke="#000" stroke-width="0.12">entrega</text>
<text x="437.66" y="351.7" font-size="9.4" fill="#000" textLength="11.69" lengthAdjust="spacingAndGlyphs" stroke="#000" stroke-width="0.12">de</text>
<text x="453.73" y="351.7" font-size="9.4" fill="#000" textLength="33.64" lengthAdjust="spacingAndGlyphs" stroke="#000" stroke-width="0.12">plantas</text>
<text x="491.76" y="351.7" font-size="9.4" fill="#000" textLength="35.42" lengthAdjust="spacingAndGlyphs" stroke="#000" stroke-width="0.12">frutales</text>
<text x="531.56" y="351.7" font-size="9.4" fill="#000" textLength="5.47" lengthAdjust="spacingAndGlyphs" stroke="#000" stroke-width="0.12">a</text>
<text x="541.42" y="351.7" font-size="9.4" fill="#000" textLength="34.0" lengthAdjust="spacingAndGlyphs" stroke="#000" stroke-width="0.12">cambio</text>
<text x="579.81" y="351.7" font-size="9.4" fill="#000" textLength="11.69" lengthAdjust="spacingAndGlyphs" stroke="#000" stroke-width="0.12">de</text>
<text x="186.5" y="366.7" font-size="9.4" fill="#000" textLength="85.28" lengthAdjust="spacingAndGlyphs" stroke="#000" stroke-width="0.12">electrodomésticos</text>
<text x="278.19" y="366.7" font-size="9.4" fill="#000" textLength="42.32" lengthAdjust="spacingAndGlyphs" stroke="#000" stroke-width="0.12">dañados,</text>
<text x="326.91" y="366.7" font-size="9.4" fill="#000" textLength="16.77" lengthAdjust="spacingAndGlyphs" stroke="#000" stroke-width="0.12">con</text>
<text x="350.09" y="366.7" font-size="9.4" fill="#000" textLength="8.31" lengthAdjust="spacingAndGlyphs" stroke="#000" stroke-width="0.12">el</text>
<text x="364.81" y="366.7" font-size="9.4" fill="#000" textLength="12.06" lengthAdjust="spacingAndGlyphs" stroke="#000" stroke-width="0.12">fin</text>
<text x="383.27" y="366.7" font-size="9.4" fill="#000" textLength="11.69" lengthAdjust="spacingAndGlyphs" stroke="#000" stroke-width="0.12">de</text>
<text x="401.37" y="366.7" font-size="9.4" fill="#000" textLength="32.97" lengthAdjust="spacingAndGlyphs" stroke="#000" stroke-width="0.12">reducir</text>
<text x="440.75" y="366.7" font-size="9.4" fill="#000" textLength="8.1" lengthAdjust="spacingAndGlyphs" stroke="#000" stroke-width="0.12">la</text>
<text x="455.26" y="366.7" font-size="9.4" fill="#000" textLength="68.55" lengthAdjust="spacingAndGlyphs" stroke="#000" stroke-width="0.12">contaminación</text>
<text x="530.21" y="366.7" font-size="9.4" fill="#000" textLength="11.69" lengthAdjust="spacingAndGlyphs" stroke="#000" stroke-width="0.12">de</text>
<text x="548.31" y="366.7" font-size="9.4" fill="#000" textLength="43.19" lengthAdjust="spacingAndGlyphs" stroke="#000" stroke-width="0.12">desechos</text>
<text x="186.5" y="381.8" font-size="9.4" fill="#000" textLength="56.35" lengthAdjust="spacingAndGlyphs" stroke="#000" stroke-width="0.12">electrónicos</text>
<text x="251.24" y="381.8" font-size="9.4" fill="#000" textLength="5.47" lengthAdjust="spacingAndGlyphs" stroke="#000" stroke-width="0.12">a</text>
<text x="265.11" y="381.8" font-size="9.4" fill="#000" textLength="34.0" lengthAdjust="spacingAndGlyphs" stroke="#000" stroke-width="0.12">cambio</text>
<text x="307.5" y="381.8" font-size="9.4" fill="#000" textLength="11.69" lengthAdjust="spacingAndGlyphs" stroke="#000" stroke-width="0.12">de</text>
<text x="327.58" y="381.8" font-size="9.4" fill="#000" textLength="17.7" lengthAdjust="spacingAndGlyphs" stroke="#000" stroke-width="0.12">que</text>
<text x="353.67" y="381.8" font-size="9.4" fill="#000" textLength="12.57" lengthAdjust="spacingAndGlyphs" stroke="#000" stroke-width="0.12">las</text>
<text x="374.63" y="381.8" font-size="9.4" fill="#000" textLength="41.93" lengthAdjust="spacingAndGlyphs" stroke="#000" stroke-width="0.12">personas</text>
<text x="424.95" y="381.8" font-size="9.4" fill="#000" textLength="35.18" lengthAdjust="spacingAndGlyphs" stroke="#000" stroke-width="0.12">puedan</text>
<text x="468.52" y="381.8" font-size="9.4" fill="#000" textLength="34.28" lengthAdjust="spacingAndGlyphs" stroke="#000" stroke-width="0.12">cultivar</text>
<text x="511.2" y="381.8" font-size="9.4" fill="#000" textLength="33.64" lengthAdjust="spacingAndGlyphs" stroke="#000" stroke-width="0.12">plantas</text>
<text x="553.22" y="381.8" font-size="9.4" fill="#000" textLength="38.28" lengthAdjust="spacingAndGlyphs" stroke="#000" stroke-width="0.12">frutales,</text>
<text x="186.5" y="396.8" font-size="9.4" fill="#000" textLength="64.15" lengthAdjust="spacingAndGlyphs" stroke="#000" stroke-width="0.12">ornamentales</text>
<text x="253.24" y="396.8" font-size="9.4" fill="#000" textLength="5.17" lengthAdjust="spacingAndGlyphs" stroke="#000" stroke-width="0.12">y</text>
<text x="261.0" y="396.8" font-size="9.4" fill="#000" textLength="33.64" lengthAdjust="spacingAndGlyphs" stroke="#000" stroke-width="0.12">plantas</text>
<text x="297.22" y="396.8" font-size="9.4" fill="#000" textLength="57.19" lengthAdjust="spacingAndGlyphs" stroke="#000" stroke-width="0.12">maderables.</text>
<text x="186.5" y="411.8" font-size="9.4" fill="#000" textLength="8.68" lengthAdjust="spacingAndGlyphs" stroke="#000" stroke-width="0.12">2.</text>
<text x="197.34" y="411.8" font-size="9.4" fill="#000" textLength="45.09" lengthAdjust="spacingAndGlyphs" stroke="#000" stroke-width="0.12">Extensión</text>
<text x="244.6" y="411.8" font-size="9.4" fill="#000" textLength="11.69" lengthAdjust="spacingAndGlyphs" stroke="#000" stroke-width="0.12">de</text>
<text x="258.46" y="411.8" font-size="9.4" fill="#000" textLength="8.1" lengthAdjust="spacingAndGlyphs" stroke="#000" stroke-width="0.12">la</text>
<text x="268.72" y="411.8" font-size="9.4" fill="#000" textLength="19.15" lengthAdjust="spacingAndGlyphs" stroke="#000" stroke-width="0.12">ruta</text>
<text x="290.04" y="411.8" font-size="9.4" fill="#000" textLength="14.32" lengthAdjust="spacingAndGlyphs" stroke="#000" stroke-width="0.12">del</text>
<text x="306.52" y="411.8" font-size="9.4" fill="#000" textLength="43.34" lengthAdjust="spacingAndGlyphs" stroke="#000" stroke-width="0.12">guayacán</text>
<text x="352.03" y="411.8" font-size="9.4" fill="#000" textLength="5.69" lengthAdjust="spacingAndGlyphs" stroke="#000" stroke-width="0.12">–</text>
<text x="359.89" y="411.8" font-size="9.4" fill="#000" textLength="44.86" lengthAdjust="spacingAndGlyphs" stroke="#000" stroke-width="0.12">Mediante</text>
<text x="406.91" y="411.8" font-size="9.4" fill="#000" textLength="8.31" lengthAdjust="spacingAndGlyphs" stroke="#000" stroke-width="0.12">el</text>
<text x="417.38" y="411.8" font-size="9.4" fill="#000" textLength="41.07" lengthAdjust="spacingAndGlyphs" stroke="#000" stroke-width="0.12">proyecto</text>
<text x="460.62" y="411.8" font-size="9.4" fill="#000" textLength="11.69" lengthAdjust="spacingAndGlyphs" stroke="#000" stroke-width="0.12">de</text>
<text x="474.48" y="411.8" font-size="9.4" fill="#000" textLength="61.21" lengthAdjust="spacingAndGlyphs" stroke="#000" stroke-width="0.12">reforestación</text>
<text x="537.85" y="411.8" font-size="9.4" fill="#000" textLength="10.16" lengthAdjust="spacingAndGlyphs" stroke="#000" stroke-width="0.12">se</text>
<text x="550.18" y="411.8" font-size="9.4" fill="#000" textLength="41.32" lengthAdjust="spacingAndGlyphs" stroke="#000" stroke-width="0.12">adquiere</text>
<text x="186.5" y="426.7" font-size="9.4" fill="#000" textLength="26.16" lengthAdjust="spacingAndGlyphs" stroke="#000" stroke-width="0.12">cañas</text>
<text x="215.62" y="426.7" font-size="9.4" fill="#000" textLength="20.71" lengthAdjust="spacingAndGlyphs" stroke="#000" stroke-width="0.12">para</text>
<text x="239.29" y="426.7" font-size="9.4" fill="#000" textLength="28.05" lengthAdjust="spacingAndGlyphs" stroke="#000" stroke-width="0.12">armar</text>
<text x="270.3" y="426.7" font-size="9.4" fill="#000" textLength="13.12" lengthAdjust="spacingAndGlyphs" stroke="#000" stroke-width="0.12">los</text>
<text x="286.38" y="426.7" font-size="9.4" fill="#000" textLength="61.29" lengthAdjust="spacingAndGlyphs" stroke="#000" stroke-width="0.12">cerramientos</text>
<text x="350.63" y="426.7" font-size="9.4" fill="#000" textLength="20.71" lengthAdjust="spacingAndGlyphs" stroke="#000" stroke-width="0.12">para</text>
<text x="374.29" y="426.7" font-size="9.4" fill="#000" textLength="33.2" lengthAdjust="spacingAndGlyphs" stroke="#000" stroke-width="0.12">nuevos</text>
<text x="410.45" y="426.7" font-size="9.4" fill="#000" textLength="34.27" lengthAdjust="spacingAndGlyphs" stroke="#000" stroke-width="0.12">árboles</text>
<text x="447.68" y="426.7" font-size="9.4" fill="#000" textLength="45.67" lengthAdjust="spacingAndGlyphs" stroke="#000" stroke-width="0.12">plantados</text>
<text x="496.31" y="426.7" font-size="9.4" fill="#000" textLength="11.69" lengthAdjust="spacingAndGlyphs" stroke="#000" stroke-width="0.12">de</text>
<text x="510.96" y="426.7" font-size="9.4" fill="#000" textLength="46.19" lengthAdjust="spacingAndGlyphs" stroke="#000" stroke-width="0.12">guayacán,</text>
<text x="560.12" y="426.7" font-size="9.4" fill="#000" textLength="31.38" lengthAdjust="spacingAndGlyphs" stroke="#000" stroke-width="0.12">mismo</text>
<text x="186.5" y="441.7" font-size="9.4" fill="#000" textLength="17.7" lengthAdjust="spacingAndGlyphs" stroke="#000" stroke-width="0.12">que</text>
<text x="206.79" y="441.7" font-size="9.4" fill="#000" textLength="10.16" lengthAdjust="spacingAndGlyphs" stroke="#000" stroke-width="0.12">se</text>
<text x="219.54" y="441.7" font-size="9.4" fill="#000" textLength="42.29" lengthAdjust="spacingAndGlyphs" stroke="#000" stroke-width="0.12">agradece</text>
<text x="264.43" y="441.7" font-size="9.4" fill="#000" textLength="8.1" lengthAdjust="spacingAndGlyphs" stroke="#000" stroke-width="0.12">al</text>
<text x="275.12" y="441.7" font-size="9.4" fill="#000" textLength="40.08" lengthAdjust="spacingAndGlyphs" stroke="#000" stroke-width="0.12">personal</text>
<text x="317.79" y="441.7" font-size="9.4" fill="#000" textLength="11.69" lengthAdjust="spacingAndGlyphs" stroke="#000" stroke-width="0.12">de</text>
<text x="332.08" y="441.7" font-size="9.4" fill="#000" textLength="35.52" lengthAdjust="spacingAndGlyphs" stroke="#000" stroke-width="0.12">servicio</text>
<text x="370.19" y="441.7" font-size="9.4" fill="#000" textLength="44.67" lengthAdjust="spacingAndGlyphs" stroke="#000" stroke-width="0.12">generales</text>
<text x="417.45" y="441.7" font-size="9.4" fill="#000" textLength="16.02" lengthAdjust="spacingAndGlyphs" stroke="#000" stroke-width="0.12">por</text>
<text x="436.06" y="441.7" font-size="9.4" fill="#000" textLength="13.12" lengthAdjust="spacingAndGlyphs" stroke="#000" stroke-width="0.12">los</text>
<text x="451.77" y="441.7" font-size="9.4" fill="#000" textLength="28.61" lengthAdjust="spacingAndGlyphs" stroke="#000" stroke-width="0.12">cortes</text>
<text x="482.98" y="441.7" font-size="9.4" fill="#000" textLength="5.47" lengthAdjust="spacingAndGlyphs" stroke="#000" stroke-width="0.12">a</text>
<text x="491.05" y="441.7" font-size="9.4" fill="#000" textLength="39.4" lengthAdjust="spacingAndGlyphs" stroke="#000" stroke-width="0.12">medidas</text>
<text x="533.04" y="441.7" font-size="9.4" fill="#000" textLength="11.69" lengthAdjust="spacingAndGlyphs" stroke="#000" stroke-width="0.12">de</text>
<text x="547.32" y="441.7" font-size="9.4" fill="#000" textLength="12.57" lengthAdjust="spacingAndGlyphs" stroke="#000" stroke-width="0.12">las</text>
<text x="562.48" y="441.7" font-size="9.4" fill="#000" textLength="29.02" lengthAdjust="spacingAndGlyphs" stroke="#000" stroke-width="0.12">cañas,</text>
<text x="186.5" y="456.7" font-size="9.4" fill="#000" textLength="5.17" lengthAdjust="spacingAndGlyphs" stroke="#000" stroke-width="0.12">y</text>
<text x="194.0" y="456.7" font-size="9.4" fill="#000" textLength="32.01" lengthAdjust="spacingAndGlyphs" stroke="#000" stroke-width="0.12">gracias</text>
<text x="228.34" y="456.7" font-size="9.4" fill="#000" textLength="5.47" lengthAdjust="spacingAndGlyphs" stroke="#000" stroke-width="0.12">a</text>
<text x="236.15" y="456.7" font-size="9.4" fill="#000" textLength="8.1" lengthAdjust="spacingAndGlyphs" stroke="#000" stroke-width="0.12">la</text>
<text x="246.58" y="456.7" font-size="9.4" fill="#000" textLength="59.61" lengthAdjust="spacingAndGlyphs" stroke="#000" stroke-width="0.12">colaboración</text>
<text x="308.52" y="456.7" font-size="9.4" fill="#000" textLength="14.32" lengthAdjust="spacingAndGlyphs" stroke="#000" stroke-width="0.12">del</text>
<text x="325.17" y="456.7" font-size="9.4" fill="#000" textLength="33.15" lengthAdjust="spacingAndGlyphs" stroke="#000" stroke-width="0.12">distrito</text>
<text x="360.65" y="456.7" font-size="9.4" fill="#000" textLength="25.07" lengthAdjust="spacingAndGlyphs" stroke="#000" stroke-width="0.12">scout</text>
<text x="388.05" y="456.7" font-size="9.4" fill="#000" textLength="25.79" lengthAdjust="spacingAndGlyphs" stroke="#000" stroke-width="0.12">Santa</text>
<text x="416.17" y="456.7" font-size="9.4" fill="#000" textLength="25.37" lengthAdjust="spacingAndGlyphs" stroke="#000" stroke-width="0.12">Elena</text>
<text x="443.87" y="456.7" font-size="9.4" fill="#000" textLength="5.17" lengthAdjust="spacingAndGlyphs" stroke="#000" stroke-width="0.12">y</text>
<text x="451.38" y="456.7" font-size="9.4" fill="#000" textLength="8.1" lengthAdjust="spacingAndGlyphs" stroke="#000" stroke-width="0.12">la</text>
<text x="461.81" y="456.7" font-size="9.4" fill="#000" textLength="59.61" lengthAdjust="spacingAndGlyphs" stroke="#000" stroke-width="0.12">colaboración</text>
<text x="523.75" y="456.7" font-size="9.4" fill="#000" textLength="11.69" lengthAdjust="spacingAndGlyphs" stroke="#000" stroke-width="0.12">de</text>
<text x="537.77" y="456.7" font-size="9.4" fill="#000" textLength="53.73" lengthAdjust="spacingAndGlyphs" stroke="#000" stroke-width="0.12">estudiantes</text>
<text x="186.5" y="471.7" font-size="9.4" fill="#000" textLength="11.69" lengthAdjust="spacingAndGlyphs" stroke="#000" stroke-width="0.12">de</text>
<text x="200.78" y="471.7" font-size="9.4" fill="#000" textLength="17.39" lengthAdjust="spacingAndGlyphs" stroke="#000" stroke-width="0.12">PPE</text>
<text x="220.75" y="471.7" font-size="9.4" fill="#000" textLength="11.69" lengthAdjust="spacingAndGlyphs" stroke="#000" stroke-width="0.12">en</text>
<text x="235.03" y="471.7" font-size="9.4" fill="#000" textLength="13.12" lengthAdjust="spacingAndGlyphs" stroke="#000" stroke-width="0.12">los</text>
<text x="250.73" y="471.7" font-size="9.4" fill="#000" textLength="32.39" lengthAdjust="spacingAndGlyphs" stroke="#000" stroke-width="0.12">scouts,</text>
<text x="285.71" y="471.7" font-size="9.4" fill="#000" textLength="10.16" lengthAdjust="spacingAndGlyphs" stroke="#000" stroke-width="0.12">se</text>
<text x="298.45" y="471.7" font-size="9.4" fill="#000" textLength="30.04" lengthAdjust="spacingAndGlyphs" stroke="#000" stroke-width="0.12">realiza</text>
<text x="331.08" y="471.7" font-size="9.4" fill="#000" textLength="17.49" lengthAdjust="spacingAndGlyphs" stroke="#000" stroke-width="0.12">una</text>
<text x="351.15" y="471.7" font-size="9.4" fill="#000" textLength="35.71" lengthAdjust="spacingAndGlyphs" stroke="#000" stroke-width="0.12">jornada</text>
<text x="389.44" y="471.7" font-size="9.4" fill="#000" textLength="11.69" lengthAdjust="spacingAndGlyphs" stroke="#000" stroke-width="0.12">de</text>
<text x="403.72" y="471.7" font-size="9.4" fill="#000" textLength="37.14" lengthAdjust="spacingAndGlyphs" stroke="#000" stroke-width="0.12">siembra</text>
<text x="443.44" y="471.7" font-size="9.4" fill="#000" textLength="5.17" lengthAdjust="spacingAndGlyphs" stroke="#000" stroke-width="0.12">y</text>
<text x="451.2" y="471.7" font-size="9.4" fill="#000" textLength="49.12" lengthAdjust="spacingAndGlyphs" stroke="#000" stroke-width="0.12">colocación</text>
<text x="502.9" y="471.7" font-size="9.4" fill="#000" textLength="11.69" lengthAdjust="spacingAndGlyphs" stroke="#000" stroke-width="0.12">de</text>
<text x="517.18" y="471.7" font-size="9.4" fill="#000" textLength="8.1" lengthAdjust="spacingAndGlyphs" stroke="#000" stroke-width="0.12">la</text>
<text x="527.86" y="471.7" font-size="9.4" fill="#000" textLength="52.43" lengthAdjust="spacingAndGlyphs" stroke="#000" stroke-width="0.12">protección.</text>
<text x="186.5" y="486.7" font-size="9.4" fill="#000" textLength="8.68" lengthAdjust="spacingAndGlyphs" stroke="#000" stroke-width="0.12">3.</text>
<text x="198.18" y="486.7" font-size="9.4" fill="#000" textLength="44.03" lengthAdjust="spacingAndGlyphs" stroke="#000" stroke-width="0.12">Donación</text>
<text x="245.2" y="486.7" font-size="9.4" fill="#000" textLength="11.69" lengthAdjust="spacingAndGlyphs" stroke="#000" stroke-width="0.12">de</text>
<text x="259.89" y="486.7" font-size="9.4" fill="#000" textLength="29.17" lengthAdjust="spacingAndGlyphs" stroke="#000" stroke-width="0.12">planta</text>
<text x="292.05" y="486.7" font-size="9.4" fill="#000" textLength="5.69" lengthAdjust="spacingAndGlyphs" stroke="#000" stroke-width="0.12">–</text>
<text x="300.74" y="486.7" font-size="9.4" fill="#000" textLength="10.16" lengthAdjust="spacingAndGlyphs" stroke="#000" stroke-width="0.12">se</text>
<text x="313.9" y="486.7" font-size="9.4" fill="#000" textLength="22.0" lengthAdjust="spacingAndGlyphs" stroke="#000" stroke-width="0.12">hace</text>
<text x="338.9" y="486.7" font-size="9.4" fill="#000" textLength="8.1" lengthAdjust="spacingAndGlyphs" stroke="#000" stroke-width="0.12">la</text>
<text x="349.99" y="486.7" font-size="9.4" fill="#000" textLength="35.58" lengthAdjust="spacingAndGlyphs" stroke="#000" stroke-width="0.12">entrega</text>
<text x="388.57" y="486.7" font-size="9.4" fill="#000" textLength="11.69" lengthAdjust="spacingAndGlyphs" stroke="#000" stroke-width="0.12">de</text>
<text x="403.26" y="486.7" font-size="9.4" fill="#000" textLength="33.64" lengthAdjust="spacingAndGlyphs" stroke="#000" stroke-width="0.12">plantas</text>
<text x="439.89" y="486.7" font-size="9.4" fill="#000" textLength="5.47" lengthAdjust="spacingAndGlyphs" stroke="#000" stroke-width="0.12">a</text>
<text x="448.36" y="486.7" font-size="9.4" fill="#000" textLength="12.57" lengthAdjust="spacingAndGlyphs" stroke="#000" stroke-width="0.12">las</text>
<text x="463.93" y="486.7" font-size="9.4" fill="#000" textLength="58.82" lengthAdjust="spacingAndGlyphs" stroke="#000" stroke-width="0.12">instituciones</text>
<text x="525.74" y="486.7" font-size="9.4" fill="#000" textLength="49.11" lengthAdjust="spacingAndGlyphs" stroke="#000" stroke-width="0.12">educativas</text>
<text x="577.85" y="486.7" font-size="9.4" fill="#000" textLength="5.17" lengthAdjust="spacingAndGlyphs" stroke="#000" stroke-width="0.12">y</text>
<text x="586.03" y="486.7" font-size="9.4" fill="#000" textLength="5.47" lengthAdjust="spacingAndGlyphs" stroke="#000" stroke-width="0.12">a</text>
<text x="186.5" y="502.4" font-size="9.4" fill="#000" textLength="8.1" lengthAdjust="spacingAndGlyphs" stroke="#000" stroke-width="0.12">la</text>
<text x="197.18" y="502.4" font-size="9.4" fill="#000" textLength="37.38" lengthAdjust="spacingAndGlyphs" stroke="#000" stroke-width="0.12">comuna</text>
<text x="237.15" y="502.4" font-size="9.4" fill="#000" textLength="20.71" lengthAdjust="spacingAndGlyphs" stroke="#000" stroke-width="0.12">para</text>
<text x="260.44" y="502.4" font-size="9.4" fill="#000" textLength="14.14" lengthAdjust="spacingAndGlyphs" stroke="#000" stroke-width="0.12">ser</text>
<text x="277.16" y="502.4" font-size="9.4" fill="#000" textLength="24.86" lengthAdjust="spacingAndGlyphs" stroke="#000" stroke-width="0.12">parte</text>
<text x="304.61" y="502.4" font-size="9.4" fill="#000" textLength="11.69" lengthAdjust="spacingAndGlyphs" stroke="#000" stroke-width="0.12">de</text>
<text x="318.88" y="502.4" font-size="9.4" fill="#000" textLength="8.1" lengthAdjust="spacingAndGlyphs" stroke="#000" stroke-width="0.12">la</text>
<text x="329.57" y="502.4" font-size="9.4" fill="#000" textLength="61.21" lengthAdjust="spacingAndGlyphs" stroke="#000" stroke-width="0.12">reforestación</text>
<text x="393.36" y="502.4" font-size="9.4" fill="#000" textLength="50.91" lengthAdjust="spacingAndGlyphs" stroke="#000" stroke-width="0.12">parroquial.</text>
<text x="149" y="548.8" font-size="9.4" fill="#000" textLength="8.68" lengthAdjust="spacingAndGlyphs" stroke="#000" stroke-width="0.12">2.</text>
<text x="186.3" y="548.8" font-size="9.4" fill="#000" textLength="69.27" lengthAdjust="spacingAndGlyphs" stroke="#000" stroke-width="0.12">Infraestructura</text>
<text x="258.16" y="548.8" font-size="9.4" fill="#000" textLength="5.17" lengthAdjust="spacingAndGlyphs" stroke="#000" stroke-width="0.12">y</text>
<text x="265.91" y="548.8" font-size="9.4" fill="#000" textLength="40.77" lengthAdjust="spacingAndGlyphs" stroke="#000" stroke-width="0.12">Servicios</text>
<text x="309.27" y="548.8" font-size="9.4" fill="#000" textLength="34.02" lengthAdjust="spacingAndGlyphs" stroke="#000" stroke-width="0.12">Básicos</text>
<text x="345.87" y="548.8" font-size="9.4" fill="#000" textLength="3.5" lengthAdjust="spacingAndGlyphs" stroke="#000" stroke-width="0.12">-</text>
<text x="351.96" y="548.8" font-size="9.4" fill="#000" textLength="45.1" lengthAdjust="spacingAndGlyphs" stroke="#000" stroke-width="0.12">Gestionar</text>
<text x="399.64" y="548.8" font-size="9.4" fill="#000" textLength="8.1" lengthAdjust="spacingAndGlyphs" stroke="#000" stroke-width="0.12">la</text>
<text x="410.32" y="548.8" font-size="9.4" fill="#000" textLength="50.82" lengthAdjust="spacingAndGlyphs" stroke="#000" stroke-width="0.12">ampliación</text>
<text x="463.73" y="548.8" font-size="9.4" fill="#000" textLength="11.69" lengthAdjust="spacingAndGlyphs" stroke="#000" stroke-width="0.12">de</text>
<text x="478.01" y="548.8" font-size="9.4" fill="#000" textLength="8.1" lengthAdjust="spacingAndGlyphs" stroke="#000" stroke-width="0.12">la</text>
<text x="488.69" y="548.8" font-size="9.4" fill="#000" textLength="45.5" lengthAdjust="spacingAndGlyphs" stroke="#000" stroke-width="0.12">cobertura</text>
<text x="536.78" y="548.8" font-size="9.4" fill="#000" textLength="11.69" lengthAdjust="spacingAndGlyphs" stroke="#000" stroke-width="0.12">de</text>
<text x="149" y="563.8" font-size="9.4" fill="#000" textLength="40.77" lengthAdjust="spacingAndGlyphs" stroke="#000" stroke-width="0.12">Servicios</text>
<text x="192.35" y="563.8" font-size="9.4" fill="#000" textLength="34.02" lengthAdjust="spacingAndGlyphs" stroke="#000" stroke-width="0.12">Básicos</text>
<text x="228.96" y="563.8" font-size="9.4" fill="#000" textLength="38.4" lengthAdjust="spacingAndGlyphs" stroke="#000" stroke-width="0.12">Públicos</text>
<text x="269.94" y="563.8" font-size="9.4" fill="#000" textLength="11.69" lengthAdjust="spacingAndGlyphs" stroke="#000" stroke-width="0.12">en</text>
<text x="284.22" y="563.8" font-size="9.4" fill="#000" textLength="8.1" lengthAdjust="spacingAndGlyphs" stroke="#000" stroke-width="0.12">la</text>
<text x="294.9" y="563.8" font-size="9.4" fill="#000" textLength="45.06" lengthAdjust="spacingAndGlyphs" stroke="#000" stroke-width="0.12">Parroquia</text>
<text x="342.54" y="563.8" font-size="9.4" fill="#000" textLength="47.08" lengthAdjust="spacingAndGlyphs" stroke="#000" stroke-width="0.12">Atahualpa</text>
<text x="392.2" y="563.8" font-size="9.4" fill="#000" textLength="5.47" lengthAdjust="spacingAndGlyphs" stroke="#000" stroke-width="0.12">a</text>
<text x="400.26" y="563.8" font-size="9.4" fill="#000" textLength="28.07" lengthAdjust="spacingAndGlyphs" stroke="#000" stroke-width="0.12">través</text>
<text x="430.92" y="563.8" font-size="9.4" fill="#000" textLength="11.69" lengthAdjust="spacingAndGlyphs" stroke="#000" stroke-width="0.12">de</text>
<text x="445.19" y="563.8" font-size="9.4" fill="#000" textLength="8.1" lengthAdjust="spacingAndGlyphs" stroke="#000" stroke-width="0.12">la</text>
<text x="455.88" y="563.8" font-size="9.4" fill="#000" textLength="33.72" lengthAdjust="spacingAndGlyphs" stroke="#000" stroke-width="0.12">gestión</text>
<text x="492.18" y="563.8" font-size="9.4" fill="#000" textLength="20.77" lengthAdjust="spacingAndGlyphs" stroke="#000" stroke-width="0.12">ante</text>
<text x="515.53" y="563.8" font-size="9.4" fill="#000" textLength="13.12" lengthAdjust="spacingAndGlyphs" stroke="#000" stroke-width="0.12">los</text>
<text x="531.23" y="563.8" font-size="9.4" fill="#000" textLength="53.23" lengthAdjust="spacingAndGlyphs" stroke="#000" stroke-width="0.12">organismos</text>
<text x="149" y="578.8" font-size="9.4" fill="#000" textLength="58.23" lengthAdjust="spacingAndGlyphs" stroke="#000" stroke-width="0.12">proveedores</text>
<text x="209.82" y="578.8" font-size="9.4" fill="#000" textLength="11.69" lengthAdjust="spacingAndGlyphs" stroke="#000" stroke-width="0.12">de</text>
<text x="224.09" y="578.8" font-size="9.4" fill="#000" textLength="39.99" lengthAdjust="spacingAndGlyphs" stroke="#000" stroke-width="0.12">servicios</text>
<text x="266.67" y="578.8" font-size="9.4" fill="#000" textLength="38.5" lengthAdjust="spacingAndGlyphs" stroke="#000" stroke-width="0.12">públicos</text>
<text x="307.75" y="578.8" font-size="9.4" fill="#000" textLength="25.92" lengthAdjust="spacingAndGlyphs" stroke="#000" stroke-width="0.12">como</text>
<text x="336.26" y="578.8" font-size="9.4" fill="#000" textLength="8.31" lengthAdjust="spacingAndGlyphs" stroke="#000" stroke-width="0.12">el</text>
<text x="347.15" y="578.8" font-size="9.4" fill="#000" textLength="46.52" lengthAdjust="spacingAndGlyphs" stroke="#000" stroke-width="0.12">Municipio</text>
<text x="396.25" y="578.8" font-size="9.4" fill="#000" textLength="11.69" lengthAdjust="spacingAndGlyphs" stroke="#000" stroke-width="0.12">de</text>
<text x="410.53" y="578.8" font-size="9.4" fill="#000" textLength="25.79" lengthAdjust="spacingAndGlyphs" stroke="#000" stroke-width="0.12">Santa</text>
<text x="438.9" y="578.8" font-size="9.4" fill="#000" textLength="28.22" lengthAdjust="spacingAndGlyphs" stroke="#000" stroke-width="0.12">Elena,</text>
<text x="469.71" y="578.8" font-size="9.4" fill="#000" textLength="44.02" lengthAdjust="spacingAndGlyphs" stroke="#000" stroke-width="0.12">Aguapen,</text>
<text x="516.32" y="578.8" font-size="9.4" fill="#000" textLength="17.03" lengthAdjust="spacingAndGlyphs" stroke="#000" stroke-width="0.12">etc.</text>
<text x="535.94" y="578.8" font-size="9.4" fill="#000" textLength="16.77" lengthAdjust="spacingAndGlyphs" stroke="#000" stroke-width="0.12">con</text>
<text x="555.29" y="578.8" font-size="9.4" fill="#000" textLength="8.1" lengthAdjust="spacingAndGlyphs" stroke="#000" stroke-width="0.12">la</text>
<text x="149" y="593.6" font-size="9.4" fill="#000" textLength="40.26" lengthAdjust="spacingAndGlyphs" stroke="#000" stroke-width="0.12">finalidad</text>
<text x="191.85" y="593.6" font-size="9.4" fill="#000" textLength="11.69" lengthAdjust="spacingAndGlyphs" stroke="#000" stroke-width="0.12">de</text>
<text x="206.12" y="593.6" font-size="9.4" fill="#000" textLength="36.79" lengthAdjust="spacingAndGlyphs" stroke="#000" stroke-width="0.12">mejorar</text>
<text x="245.5" y="593.6" font-size="9.4" fill="#000" textLength="8.1" lengthAdjust="spacingAndGlyphs" stroke="#000" stroke-width="0.12">la</text>
<text x="256.18" y="593.6" font-size="9.4" fill="#000" textLength="32.95" lengthAdjust="spacingAndGlyphs" stroke="#000" stroke-width="0.12">calidad</text>
<text x="291.71" y="593.6" font-size="9.4" fill="#000" textLength="11.69" lengthAdjust="spacingAndGlyphs" stroke="#000" stroke-width="0.12">de</text>
<text x="305.98" y="593.6" font-size="9.4" fill="#000" textLength="19.27" lengthAdjust="spacingAndGlyphs" stroke="#000" stroke-width="0.12">vida</text>
<text x="327.83" y="593.6" font-size="9.4" fill="#000" textLength="11.69" lengthAdjust="spacingAndGlyphs" stroke="#000" stroke-width="0.12">de</text>
<text x="342.11" y="593.6" font-size="9.4" fill="#000" textLength="13.12" lengthAdjust="spacingAndGlyphs" stroke="#000" stroke-width="0.12">los</text>
<text x="357.82" y="593.6" font-size="9.4" fill="#000" textLength="49.04" lengthAdjust="spacingAndGlyphs" stroke="#000" stroke-width="0.12">habitantes</text>
<text x="409.44" y="593.6" font-size="9.4" fill="#000" textLength="11.69" lengthAdjust="spacingAndGlyphs" stroke="#000" stroke-width="0.12">de</text>
<text x="423.71" y="593.6" font-size="9.4" fill="#000" textLength="8.1" lengthAdjust="spacingAndGlyphs" stroke="#000" stroke-width="0.12">la</text>
<text x="434.39" y="593.6" font-size="9.4" fill="#000" textLength="45.4" lengthAdjust="spacingAndGlyphs" stroke="#000" stroke-width="0.12">parroquia</text>
<text x="482.38" y="593.6" font-size="9.4" fill="#000" textLength="47.08" lengthAdjust="spacingAndGlyphs" stroke="#000" stroke-width="0.12">Atahualpa</text>
<text x="532.04" y="593.6" font-size="9.4" fill="#000" textLength="36.53" lengthAdjust="spacingAndGlyphs" stroke="#000" stroke-width="0.12">durante</text>
<text x="571.15" y="593.6" font-size="9.4" fill="#000" textLength="8.31" lengthAdjust="spacingAndGlyphs" stroke="#000" stroke-width="0.12">el</text>
<text x="149" y="609.6" font-size="9.4" fill="#000" textLength="36.36" lengthAdjust="spacingAndGlyphs" stroke="#000" stroke-width="0.12">periodo</text>
<text x="187.94" y="609.6" font-size="9.4" fill="#000" textLength="23.17" lengthAdjust="spacingAndGlyphs" stroke="#000" stroke-width="0.12">2023</text>
<text x="213.7" y="609.6" font-size="9.4" fill="#000" textLength="8.1" lengthAdjust="spacingAndGlyphs" stroke="#000" stroke-width="0.12">al</text>
<text x="224.38" y="609.6" font-size="9.4" fill="#000" textLength="23.17" lengthAdjust="spacingAndGlyphs" stroke="#000" stroke-width="0.12">2027</text>
<text x="149" y="632.7" font-size="9.4" fill="#000" textLength="3.5" lengthAdjust="spacingAndGlyphs" stroke="#000" stroke-width="0.12">-</text>
<text x="155.08" y="632.7" font-size="9.4" fill="#000" textLength="8.68" lengthAdjust="spacingAndGlyphs" stroke="#000" stroke-width="0.12">1.</text>
<text x="166.35" y="632.7" font-size="9.4" fill="#000" textLength="40.97" lengthAdjust="spacingAndGlyphs" stroke="#000" stroke-width="0.12">Proyecto</text>
<text x="209.9" y="632.7" font-size="9.4" fill="#000" textLength="11.69" lengthAdjust="spacingAndGlyphs" stroke="#000" stroke-width="0.12">de</text>
<text x="224.18" y="632.7" font-size="9.4" fill="#000" textLength="50.5" lengthAdjust="spacingAndGlyphs" stroke="#000" stroke-width="0.12">alumbrado</text>
<text x="277.26" y="632.7" font-size="9.4" fill="#000" textLength="33.93" lengthAdjust="spacingAndGlyphs" stroke="#000" stroke-width="0.12">Público</text>
<text x="313.77" y="632.7" font-size="9.4" fill="#000" textLength="11.69" lengthAdjust="spacingAndGlyphs" stroke="#000" stroke-width="0.12">en</text>
<text x="328.05" y="632.7" font-size="9.4" fill="#000" textLength="8.1" lengthAdjust="spacingAndGlyphs" stroke="#000" stroke-width="0.12">la</text>
<text x="338.73" y="632.7" font-size="9.4" fill="#000" textLength="21.15" lengthAdjust="spacingAndGlyphs" stroke="#000" stroke-width="0.12">calle</text>
<text x="362.46" y="632.7" font-size="9.4" fill="#000" textLength="37.88" lengthAdjust="spacingAndGlyphs" stroke="#000" stroke-width="0.12">Gilberto</text>
<text x="402.92" y="632.7" font-size="9.4" fill="#000" textLength="28.07" lengthAdjust="spacingAndGlyphs" stroke="#000" stroke-width="0.12">Quimi</text>
<text x="433.58" y="632.7" font-size="9.4" fill="#000" textLength="5.69" lengthAdjust="spacingAndGlyphs" stroke="#000" stroke-width="0.12">–</text>
<text x="441.86" y="632.7" font-size="9.4" fill="#000" textLength="33.84" lengthAdjust="spacingAndGlyphs" stroke="#000" stroke-width="0.12">Gracias</text>
<text x="478.28" y="632.7" font-size="9.4" fill="#000" textLength="5.47" lengthAdjust="spacingAndGlyphs" stroke="#000" stroke-width="0.12">a</text>
<text x="486.34" y="632.7" font-size="9.4" fill="#000" textLength="13.12" lengthAdjust="spacingAndGlyphs" stroke="#000" stroke-width="0.12">los</text>
<text x="502.04" y="632.7" font-size="9.4" fill="#000" textLength="46.45" lengthAdjust="spacingAndGlyphs" stroke="#000" stroke-width="0.12">convenios</text>
<text x="551.07" y="632.7" font-size="9.4" fill="#000" textLength="16.77" lengthAdjust="spacingAndGlyphs" stroke="#000" stroke-width="0.12">con</text>
<text x="149" y="647.7" font-size="9.4" fill="#000" textLength="23.86" lengthAdjust="spacingAndGlyphs" stroke="#000" stroke-width="0.12">CNEL</text>
<text x="175.44" y="647.7" font-size="9.4" fill="#000" textLength="12.91" lengthAdjust="spacingAndGlyphs" stroke="#000" stroke-width="0.12">EP.</text>
<text x="190.94" y="647.7" font-size="9.4" fill="#000" textLength="33.45" lengthAdjust="spacingAndGlyphs" stroke="#000" stroke-width="0.12">Unidad</text>
<text x="226.97" y="647.7" font-size="9.4" fill="#000" textLength="11.69" lengthAdjust="spacingAndGlyphs" stroke="#000" stroke-width="0.12">de</text>
<text x="241.25" y="647.7" font-size="9.4" fill="#000" textLength="37.88" lengthAdjust="spacingAndGlyphs" stroke="#000" stroke-width="0.12">Negocio</text>
<text x="281.71" y="647.7" font-size="9.4" fill="#000" textLength="25.79" lengthAdjust="spacingAndGlyphs" stroke="#000" stroke-width="0.12">Santa</text>
<text x="310.09" y="647.7" font-size="9.4" fill="#000" textLength="25.37" lengthAdjust="spacingAndGlyphs" stroke="#000" stroke-width="0.12">Elena</text>
<text x="338.04" y="647.7" font-size="9.4" fill="#000" textLength="5.17" lengthAdjust="spacingAndGlyphs" stroke="#000" stroke-width="0.12">y</text>
<text x="345.8" y="647.7" font-size="9.4" fill="#000" textLength="48.08" lengthAdjust="spacingAndGlyphs" stroke="#000" stroke-width="0.12">realizando</text>
<text x="396.47" y="647.7" font-size="9.4" fill="#000" textLength="13.12" lengthAdjust="spacingAndGlyphs" stroke="#000" stroke-width="0.12">los</text>
<text x="412.17" y="647.7" font-size="9.4" fill="#000" textLength="41.32" lengthAdjust="spacingAndGlyphs" stroke="#000" stroke-width="0.12">procesos</text>
<text x="456.08" y="647.7" font-size="9.4" fill="#000" textLength="43.32" lengthAdjust="spacingAndGlyphs" stroke="#000" stroke-width="0.12">correctos</text>
<text x="501.98" y="647.7" font-size="9.4" fill="#000" textLength="11.69" lengthAdjust="spacingAndGlyphs" stroke="#000" stroke-width="0.12">de</text>
<text x="516.26" y="647.7" font-size="9.4" fill="#000" textLength="52.7" lengthAdjust="spacingAndGlyphs" stroke="#000" stroke-width="0.12">adquisición</text>
<text x="571.54" y="647.7" font-size="9.4" fill="#000" textLength="11.69" lengthAdjust="spacingAndGlyphs" stroke="#000" stroke-width="0.12">de</text>
<text x="149" y="662.7" font-size="9.4" fill="#000" textLength="13.12" lengthAdjust="spacingAndGlyphs" stroke="#000" stroke-width="0.12">los</text>
<text x="164.71" y="662.7" font-size="9.4" fill="#000" textLength="63.85" lengthAdjust="spacingAndGlyphs" stroke="#000" stroke-width="0.12">implementos,</text>
<text x="231.14" y="662.7" font-size="9.4" fill="#000" textLength="10.16" lengthAdjust="spacingAndGlyphs" stroke="#000" stroke-width="0.12">se</text>
<text x="243.88" y="662.7" font-size="9.4" fill="#000" textLength="30.04" lengthAdjust="spacingAndGlyphs" stroke="#000" stroke-width="0.12">realiza</text>
<text x="276.51" y="662.7" font-size="9.4" fill="#000" textLength="8.31" lengthAdjust="spacingAndGlyphs" stroke="#000" stroke-width="0.12">el</text>
<text x="287.41" y="662.7" font-size="9.4" fill="#000" textLength="33.3" lengthAdjust="spacingAndGlyphs" stroke="#000" stroke-width="0.12">trabajo</text>
<text x="323.29" y="662.7" font-size="9.4" fill="#000" textLength="11.69" lengthAdjust="spacingAndGlyphs" stroke="#000" stroke-width="0.12">de</text>
<text x="337.56" y="662.7" font-size="9.4" fill="#000" textLength="49.12" lengthAdjust="spacingAndGlyphs" stroke="#000" stroke-width="0.12">colocación</text>
<text x="389.27" y="662.7" font-size="9.4" fill="#000" textLength="11.69" lengthAdjust="spacingAndGlyphs" stroke="#000" stroke-width="0.12">de</text>
<text x="403.54" y="662.7" font-size="9.4" fill="#000" textLength="30.24" lengthAdjust="spacingAndGlyphs" stroke="#000" stroke-width="0.12">postes</text>
<text x="436.37" y="662.7" font-size="9.4" fill="#000" textLength="5.69" lengthAdjust="spacingAndGlyphs" stroke="#000" stroke-width="0.12">e</text>
<text x="444.64" y="662.7" font-size="9.4" fill="#000" textLength="51.04" lengthAdjust="spacingAndGlyphs" stroke="#000" stroke-width="0.12">iluminarias</text>
<text x="498.26" y="662.7" font-size="9.4" fill="#000" textLength="5.47" lengthAdjust="spacingAndGlyphs" stroke="#000" stroke-width="0.12">a</text>
<text x="506.32" y="662.7" font-size="9.4" fill="#000" textLength="8.65" lengthAdjust="spacingAndGlyphs" stroke="#000" stroke-width="0.12">lo</text>
<text x="517.55" y="662.7" font-size="9.4" fill="#000" textLength="23.26" lengthAdjust="spacingAndGlyphs" stroke="#000" stroke-width="0.12">largo</text>
<text x="543.39" y="662.7" font-size="9.4" fill="#000" textLength="11.69" lengthAdjust="spacingAndGlyphs" stroke="#000" stroke-width="0.12">de</text>
<text x="557.67" y="662.7" font-size="9.4" fill="#000" textLength="8.1" lengthAdjust="spacingAndGlyphs" stroke="#000" stroke-width="0.12">la</text>
<text x="568.35" y="662.7" font-size="9.4" fill="#000" textLength="21.15" lengthAdjust="spacingAndGlyphs" stroke="#000" stroke-width="0.12">calle</text>
<text x="149" y="678.5" font-size="9.4" fill="#000" textLength="37.88" lengthAdjust="spacingAndGlyphs" stroke="#000" stroke-width="0.12">Gilberto</text>
<text x="189.46" y="678.5" font-size="9.4" fill="#000" textLength="28.07" lengthAdjust="spacingAndGlyphs" stroke="#000" stroke-width="0.12">Quimi</text>
<text x="186.9" y="701.7" font-size="9.4" fill="#000" textLength="8.68" lengthAdjust="spacingAndGlyphs" stroke="#000" stroke-width="0.12">2.</text>
<text x="198.11" y="701.7" font-size="9.4" fill="#000" textLength="51.89" lengthAdjust="spacingAndGlyphs" stroke="#000" stroke-width="0.12">Reparación</text>
<text x="252.52" y="701.7" font-size="9.4" fill="#000" textLength="11.69" lengthAdjust="spacingAndGlyphs" stroke="#000" stroke-width="0.12">de</text>
<text x="266.74" y="701.7" font-size="9.4" fill="#000" textLength="55.77" lengthAdjust="spacingAndGlyphs" stroke="#000" stroke-width="0.12">inmobiliario</text>
<text x="325.04" y="701.7" font-size="9.4" fill="#000" textLength="33.5" lengthAdjust="spacingAndGlyphs" stroke="#000" stroke-width="0.12">urbano</text>
<text x="361.07" y="701.7" font-size="9.4" fill="#000" textLength="5.69" lengthAdjust="spacingAndGlyphs" stroke="#000" stroke-width="0.12">–</text>
<text x="369.29" y="701.7" font-size="9.4" fill="#000" textLength="10.94" lengthAdjust="spacingAndGlyphs" stroke="#000" stroke-width="0.12">Se</text>
<text x="382.76" y="701.7" font-size="9.4" fill="#000" textLength="22.0" lengthAdjust="spacingAndGlyphs" stroke="#000" stroke-width="0.12">hace</text>
<text x="407.29" y="701.7" font-size="9.4" fill="#000" textLength="12.01" lengthAdjust="spacingAndGlyphs" stroke="#000" stroke-width="0.12">un</text>
<text x="421.83" y="701.7" font-size="9.4" fill="#000" textLength="66.87" lengthAdjust="spacingAndGlyphs" stroke="#000" stroke-width="0.12">levantamiento</text>
<text x="491.23" y="701.7" font-size="9.4" fill="#000" textLength="11.69" lengthAdjust="spacingAndGlyphs" stroke="#000" stroke-width="0.12">de</text>
<text x="505.45" y="701.7" font-size="9.4" fill="#000" textLength="55.92" lengthAdjust="spacingAndGlyphs" stroke="#000" stroke-width="0.12">información</text>
<text x="563.89" y="701.7" font-size="9.4" fill="#000" textLength="16.77" lengthAdjust="spacingAndGlyphs" stroke="#000" stroke-width="0.12">con</text>
<text x="583.19" y="701.7" font-size="9.4" fill="#000" textLength="8.31" lengthAdjust="spacingAndGlyphs" stroke="#000" stroke-width="0.12">el</text>
<text x="186.9" y="716.6" font-size="9.4" fill="#000" textLength="12.06" lengthAdjust="spacingAndGlyphs" stroke="#000" stroke-width="0.12">fin</text>
<text x="204.21" y="716.6" font-size="9.4" fill="#000" textLength="11.69" lengthAdjust="spacingAndGlyphs" stroke="#000" stroke-width="0.12">de</text>
<text x="221.15" y="716.6" font-size="9.4" fill="#000" textLength="36.35" lengthAdjust="spacingAndGlyphs" stroke="#000" stroke-width="0.12">solicitar</text>
<text x="262.75" y="716.6" font-size="9.4" fill="#000" textLength="5.47" lengthAdjust="spacingAndGlyphs" stroke="#000" stroke-width="0.12">a</text>
<text x="273.48" y="716.6" font-size="9.4" fill="#000" textLength="56.09" lengthAdjust="spacingAndGlyphs" stroke="#000" stroke-width="0.12">PACIPETROL</text>
<text x="334.82" y="716.6" font-size="9.4" fill="#000" textLength="8.1" lengthAdjust="spacingAndGlyphs" stroke="#000" stroke-width="0.12">la</text>
<text x="348.17" y="716.6" font-size="9.4" fill="#000" textLength="43.0" lengthAdjust="spacingAndGlyphs" stroke="#000" stroke-width="0.12">donación</text>
<text x="396.42" y="716.6" font-size="9.4" fill="#000" textLength="11.69" lengthAdjust="spacingAndGlyphs" stroke="#000" stroke-width="0.12">de</text>
<text x="413.36" y="716.6" font-size="9.4" fill="#000" textLength="26.34" lengthAdjust="spacingAndGlyphs" stroke="#000" stroke-width="0.12">tubos</text>
<text x="444.95" y="716.6" font-size="9.4" fill="#000" textLength="47.26" lengthAdjust="spacingAndGlyphs" stroke="#000" stroke-width="0.12">metálicos,</text>
<text x="497.46" y="716.6" font-size="9.4" fill="#000" textLength="29.73" lengthAdjust="spacingAndGlyphs" stroke="#000" stroke-width="0.12">donde</text>
<text x="532.44" y="716.6" font-size="9.4" fill="#000" textLength="10.16" lengthAdjust="spacingAndGlyphs" stroke="#000" stroke-width="0.12">se</text>
<text x="547.85" y="716.6" font-size="9.4" fill="#000" textLength="20.92" lengthAdjust="spacingAndGlyphs" stroke="#000" stroke-width="0.12">tuvo</text>
<text x="574.01" y="716.6" font-size="9.4" fill="#000" textLength="17.49" lengthAdjust="spacingAndGlyphs" stroke="#000" stroke-width="0.12">una</text>
<text x="186.9" y="731.6" font-size="9.4" fill="#000" textLength="45.2" lengthAdjust="spacingAndGlyphs" stroke="#000" stroke-width="0.12">respuesta</text>
<text x="236.14" y="731.6" font-size="9.4" fill="#000" textLength="38.82" lengthAdjust="spacingAndGlyphs" stroke="#000" stroke-width="0.12">positiva,</text>
<text x="279.01" y="731.6" font-size="9.4" fill="#000" textLength="20.71" lengthAdjust="spacingAndGlyphs" stroke="#000" stroke-width="0.12">para</text>
<text x="303.76" y="731.6" font-size="9.4" fill="#000" textLength="42.39" lengthAdjust="spacingAndGlyphs" stroke="#000" stroke-width="0.12">posterior</text>
<text x="350.2" y="731.6" font-size="9.4" fill="#000" textLength="28.17" lengthAdjust="spacingAndGlyphs" stroke="#000" stroke-width="0.12">iniciar</text>
<text x="382.42" y="731.6" font-size="9.4" fill="#000" textLength="8.1" lengthAdjust="spacingAndGlyphs" stroke="#000" stroke-width="0.12">la</text>
<text x="394.56" y="731.6" font-size="9.4" fill="#000" textLength="49.72" lengthAdjust="spacingAndGlyphs" stroke="#000" stroke-width="0.12">reparación</text>
<text x="448.33" y="731.6" font-size="9.4" fill="#000" textLength="11.69" lengthAdjust="spacingAndGlyphs" stroke="#000" stroke-width="0.12">de</text>
<text x="464.07" y="731.6" font-size="9.4" fill="#000" textLength="13.12" lengthAdjust="spacingAndGlyphs" stroke="#000" stroke-width="0.12">los</text>
<text x="481.24" y="731.6" font-size="9.4" fill="#000" textLength="48.24" lengthAdjust="spacingAndGlyphs" stroke="#000" stroke-width="0.12">inmuebles</text>
<text x="533.52" y="731.6" font-size="9.4" fill="#000" textLength="11.69" lengthAdjust="spacingAndGlyphs" stroke="#000" stroke-width="0.12">de</text>
<text x="549.27" y="731.6" font-size="9.4" fill="#000" textLength="12.57" lengthAdjust="spacingAndGlyphs" stroke="#000" stroke-width="0.12">las</text>
<text x="565.88" y="731.6" font-size="9.4" fill="#000" textLength="25.62" lengthAdjust="spacingAndGlyphs" stroke="#000" stroke-width="0.12">calles</text>
<text x="186.9" y="746.6" font-size="9.4" fill="#000" textLength="31.95" lengthAdjust="spacingAndGlyphs" stroke="#000" stroke-width="0.12">Bolívar</text>
<text x="221.43" y="746.6" font-size="9.4" fill="#000" textLength="47.79" lengthAdjust="spacingAndGlyphs" stroke="#000" stroke-width="0.12">Panchana,</text>
<text x="271.8" y="746.6" font-size="9.4" fill="#000" textLength="37.54" lengthAdjust="spacingAndGlyphs" stroke="#000" stroke-width="0.12">Wilfrido</text>
<text x="311.93" y="746.6" font-size="9.4" fill="#000" textLength="23.68" lengthAdjust="spacingAndGlyphs" stroke="#000" stroke-width="0.12">Vera,</text>
<text x="338.19" y="746.6" font-size="9.4" fill="#000" textLength="37.88" lengthAdjust="spacingAndGlyphs" stroke="#000" stroke-width="0.12">Gilberto</text>
<text x="378.66" y="746.6" font-size="9.4" fill="#000" textLength="30.92" lengthAdjust="spacingAndGlyphs" stroke="#000" stroke-width="0.12">Quimi,</text>
<text x="412.16" y="746.6" font-size="9.4" fill="#000" textLength="12.4" lengthAdjust="spacingAndGlyphs" stroke="#000" stroke-width="0.12">av.</text>
<text x="427.14" y="746.6" font-size="9.4" fill="#000" textLength="5.79" lengthAdjust="spacingAndGlyphs" stroke="#000" stroke-width="0.12">9</text>
<text x="435.52" y="746.6" font-size="9.4" fill="#000" textLength="11.69" lengthAdjust="spacingAndGlyphs" stroke="#000" stroke-width="0.12">de</text>
<text x="449.8" y="746.6" font-size="9.4" fill="#000" textLength="36.22" lengthAdjust="spacingAndGlyphs" stroke="#000" stroke-width="0.12">octubre</text>
<text x="488.6" y="746.6" font-size="9.4" fill="#000" textLength="5.17" lengthAdjust="spacingAndGlyphs" stroke="#000" stroke-width="0.12">y</text>
<text x="496.36" y="746.6" font-size="9.4" fill="#000" textLength="21.15" lengthAdjust="spacingAndGlyphs" stroke="#000" stroke-width="0.12">calle</text>
<text x="520.09" y="746.6" font-size="9.4" fill="#000" textLength="24.83" lengthAdjust="spacingAndGlyphs" stroke="#000" stroke-width="0.12">Entre</text>
<text x="547.51" y="746.6" font-size="9.4" fill="#000" textLength="19.33" lengthAdjust="spacingAndGlyphs" stroke="#000" stroke-width="0.12">Ríos</text>
<text x="168.2" y="351.7" font-size="9.4" fill="#000" textLength="3.5" lengthAdjust="spacingAndGlyphs" stroke="#000" stroke-width="0.12">-</text>
<text x="168.2" y="411.8" font-size="9.4" fill="#000" textLength="3.5" lengthAdjust="spacingAndGlyphs" stroke="#000" stroke-width="0.12">-</text>
<text x="168.2" y="486.7" font-size="9.4" fill="#000" textLength="3.5" lengthAdjust="spacingAndGlyphs" stroke="#000" stroke-width="0.12">-</text>
<text x="168.2" y="701.7" font-size="9.4" fill="#000" textLength="3.5" lengthAdjust="spacingAndGlyphs" stroke="#000" stroke-width="0.12">-</text>
<path d="M245.0 353.6 l1.5 1.6 l1.5 -1.6 l1.5 1.6 l1.5 -1.6 l1.5 1.6 l1.5 -1.6 l1.5 1.6 l1.5 -1.6 l1.5 1.6 l1.5 -1.6 l1.5 1.6 l1.5 -1.6 l1.5 1.6 l1.5 -1.6 l1.5 1.6 l1.5 -1.6 l1.5 1.6 l1.5 -1.6 l1.5 1.6 l1.5 -1.6 l1.5 1.6 l1.5 -1.6 l1.5 1.6 l1.5 -1.6 l1.5 1.6 l1.5 -1.6 l1.5 1.6 l1.5 -1.6 l1.5 1.6 l1.5 -1.6 l1.5 1.6 l1.5 -1.6 l1.5 1.6 l1.5 -1.6 l1.5 1.6 l1.5 -1.6 l1.5 1.6" stroke="#e02020" fill="none" stroke-width="0.9" />
<text x="782.5" y="282.7" font-size="9.4" fill="#000" textLength="8.31" lengthAdjust="spacingAndGlyphs" stroke="#000" stroke-width="0.12">el</text>
<text x="793.39" y="282.7" font-size="9.4" fill="#000" textLength="24.08" lengthAdjust="spacingAndGlyphs" stroke="#000" stroke-width="0.12">taller</text>
<text x="820.06" y="282.7" font-size="9.4" fill="#000" textLength="10.16" lengthAdjust="spacingAndGlyphs" stroke="#000" stroke-width="0.12">se</text>
<text x="832.8" y="282.7" font-size="9.4" fill="#000" textLength="30.04" lengthAdjust="spacingAndGlyphs" stroke="#000" stroke-width="0.12">realiza</text>
<text x="865.43" y="282.7" font-size="9.4" fill="#000" textLength="11.69" lengthAdjust="spacingAndGlyphs" stroke="#000" stroke-width="0.12">en</text>
<text x="879.71" y="282.7" font-size="9.4" fill="#000" textLength="8.1" lengthAdjust="spacingAndGlyphs" stroke="#000" stroke-width="0.12">la</text>
<text x="890.39" y="282.7" font-size="9.4" fill="#000" textLength="20.16" lengthAdjust="spacingAndGlyphs" stroke="#000" stroke-width="0.12">casa</text>
<text x="913.13" y="282.7" font-size="9.4" fill="#000" textLength="11.69" lengthAdjust="spacingAndGlyphs" stroke="#000" stroke-width="0.12">de</text>
<text x="927.41" y="282.7" font-size="9.4" fill="#000" textLength="18.04" lengthAdjust="spacingAndGlyphs" stroke="#000" stroke-width="0.12">don</text>
<text x="948.03" y="282.7" font-size="9.4" fill="#000" textLength="25.79" lengthAdjust="spacingAndGlyphs" stroke="#000" stroke-width="0.12">Pablo</text>
<text x="976.4" y="282.7" font-size="9.4" fill="#000" textLength="44.89" lengthAdjust="spacingAndGlyphs" stroke="#000" stroke-width="0.12">Tumbaco,</text>
<text x="1023.88" y="282.7" font-size="9.4" fill="#000" textLength="10.16" lengthAdjust="spacingAndGlyphs" stroke="#000" stroke-width="0.12">se</text>
<text x="1036.62" y="282.7" font-size="9.4" fill="#000" textLength="41.66" lengthAdjust="spacingAndGlyphs" stroke="#000" stroke-width="0.12">aprendió</text>
<text x="1080.87" y="282.7" font-size="9.4" fill="#000" textLength="28.05" lengthAdjust="spacingAndGlyphs" stroke="#000" stroke-width="0.12">armar</text>
<text x="1111.5" y="282.7" font-size="9.4" fill="#000" textLength="40.85" lengthAdjust="spacingAndGlyphs" stroke="#000" stroke-width="0.12">guitarras</text>
<text x="1154.94" y="282.7" font-size="9.4" fill="#000" textLength="44.56" lengthAdjust="spacingAndGlyphs" stroke="#000" stroke-width="0.12">acústicas,</text>
<text x="782.5" y="297.9" font-size="9.4" fill="#000" textLength="72.58" lengthAdjust="spacingAndGlyphs" stroke="#000" stroke-width="0.12">electroacústica,</text>
<text x="857.66" y="297.9" font-size="9.4" fill="#000" textLength="20.24" lengthAdjust="spacingAndGlyphs" stroke="#000" stroke-width="0.12">bajo</text>
<text x="880.49" y="297.9" font-size="9.4" fill="#000" textLength="5.17" lengthAdjust="spacingAndGlyphs" stroke="#000" stroke-width="0.12">y</text>
<text x="888.25" y="297.9" font-size="9.4" fill="#000" textLength="52.42" lengthAdjust="spacingAndGlyphs" stroke="#000" stroke-width="0.12">REQUINTO.</text>
<text x="782.5" y="321.2" font-size="9.4" fill="#000" textLength="8.68" lengthAdjust="spacingAndGlyphs" stroke="#000" stroke-width="0.12">3.</text>
<text x="793.76" y="321.2" font-size="9.4" fill="#000" textLength="25.07" lengthAdjust="spacingAndGlyphs" stroke="#000" stroke-width="0.12">Taller</text>
<text x="821.42" y="321.2" font-size="9.4" fill="#000" textLength="11.69" lengthAdjust="spacingAndGlyphs" stroke="#000" stroke-width="0.12">de</text>
<text x="835.69" y="321.2" font-size="9.4" fill="#000" textLength="24.14" lengthAdjust="spacingAndGlyphs" stroke="#000" stroke-width="0.12">corte</text>
<text x="862.42" y="321.2" font-size="9.4" fill="#000" textLength="5.17" lengthAdjust="spacingAndGlyphs" stroke="#000" stroke-width="0.12">y</text>
<text x="870.18" y="321.2" font-size="9.4" fill="#000" textLength="38.12" lengthAdjust="spacingAndGlyphs" stroke="#000" stroke-width="0.12">grabado</text>
<text x="910.88" y="321.2" font-size="9.4" fill="#000" textLength="11.69" lengthAdjust="spacingAndGlyphs" stroke="#000" stroke-width="0.12">en</text>
<text x="925.16" y="321.2" font-size="9.4" fill="#000" textLength="22.24" lengthAdjust="spacingAndGlyphs" stroke="#000" stroke-width="0.12">laser</text>
<text x="949.98" y="321.2" font-size="9.4" fill="#000" textLength="5.69" lengthAdjust="spacingAndGlyphs" stroke="#000" stroke-width="0.12">–</text>
<text x="958.26" y="321.2" font-size="9.4" fill="#000" textLength="8.31" lengthAdjust="spacingAndGlyphs" stroke="#000" stroke-width="0.12">el</text>
<text x="969.15" y="321.2" font-size="9.4" fill="#000" textLength="24.08" lengthAdjust="spacingAndGlyphs" stroke="#000" stroke-width="0.12">taller</text>
<text x="995.82" y="321.2" font-size="9.4" fill="#000" textLength="23.75" lengthAdjust="spacingAndGlyphs" stroke="#000" stroke-width="0.12">tiene</text>
<text x="1022.15" y="321.2" font-size="9.4" fill="#000" textLength="8.1" lengthAdjust="spacingAndGlyphs" stroke="#000" stroke-width="0.12">la</text>
<text x="1032.84" y="321.2" font-size="9.4" fill="#000" textLength="40.26" lengthAdjust="spacingAndGlyphs" stroke="#000" stroke-width="0.12">finalidad</text>
<text x="1075.68" y="321.2" font-size="9.4" fill="#000" textLength="11.69" lengthAdjust="spacingAndGlyphs" stroke="#000" stroke-width="0.12">de</text>
<text x="1089.96" y="321.2" font-size="9.4" fill="#000" textLength="50.16" lengthAdjust="spacingAndGlyphs" stroke="#000" stroke-width="0.12">desarrollar</text>
<text x="1142.7" y="321.2" font-size="9.4" fill="#000" textLength="33.2" lengthAdjust="spacingAndGlyphs" stroke="#000" stroke-width="0.12">nuevos</text>
<text x="782.5" y="336.4" font-size="9.4" fill="#000" textLength="85.38" lengthAdjust="spacingAndGlyphs" stroke="#000" stroke-width="0.12">emprendimientos,</text>
<text x="870.47" y="336.4" font-size="9.4" fill="#000" textLength="8.31" lengthAdjust="spacingAndGlyphs" stroke="#000" stroke-width="0.12">el</text>
<text x="881.36" y="336.4" font-size="9.4" fill="#000" textLength="24.08" lengthAdjust="spacingAndGlyphs" stroke="#000" stroke-width="0.12">taller</text>
<text x="908.03" y="336.4" font-size="9.4" fill="#000" textLength="8.65" lengthAdjust="spacingAndGlyphs" stroke="#000" stroke-width="0.12">lo</text>
<text x="919.26" y="336.4" font-size="9.4" fill="#000" textLength="47.13" lengthAdjust="spacingAndGlyphs" stroke="#000" stroke-width="0.12">recibieron</text>
<text x="968.98" y="336.4" font-size="9.4" fill="#000" textLength="11.59" lengthAdjust="spacingAndGlyphs" stroke="#000" stroke-width="0.12">40</text>
<text x="983.15" y="336.4" font-size="9.4" fill="#000" textLength="41.91" lengthAdjust="spacingAndGlyphs" stroke="#000" stroke-width="0.12">usuarios,</text>
<text x="1027.64" y="336.4" font-size="9.4" fill="#000" textLength="57.16" lengthAdjust="spacingAndGlyphs" stroke="#000" stroke-width="0.12">aprendieron</text>
<text x="1087.38" y="336.4" font-size="9.4" fill="#000" textLength="5.47" lengthAdjust="spacingAndGlyphs" stroke="#000" stroke-width="0.12">a</text>
<text x="1095.44" y="336.4" font-size="9.4" fill="#000" textLength="47.33" lengthAdjust="spacingAndGlyphs" stroke="#000" stroke-width="0.12">manipular</text>
<text x="1145.35" y="336.4" font-size="9.4" fill="#000" textLength="8.31" lengthAdjust="spacingAndGlyphs" stroke="#000" stroke-width="0.12">el</text>
<text x="1156.25" y="336.4" font-size="9.4" fill="#000" textLength="47.9" lengthAdjust="spacingAndGlyphs" stroke="#000" stroke-width="0.12">programa,</text>
<text x="1206.73" y="336.4" font-size="9.4" fill="#000" textLength="5.47" lengthAdjust="spacingAndGlyphs" stroke="#000" stroke-width="0.12">a</text>
<text x="782.5" y="351.7" font-size="9.4" fill="#000" textLength="34.68" lengthAdjust="spacingAndGlyphs" stroke="#000" stroke-width="0.12">calibrar</text>
<text x="819.76" y="351.7" font-size="9.4" fill="#000" textLength="8.1" lengthAdjust="spacingAndGlyphs" stroke="#000" stroke-width="0.12">la</text>
<text x="830.44" y="351.7" font-size="9.4" fill="#000" textLength="40.36" lengthAdjust="spacingAndGlyphs" stroke="#000" stroke-width="0.12">potencia</text>
<text x="873.39" y="351.7" font-size="9.4" fill="#000" textLength="5.17" lengthAdjust="spacingAndGlyphs" stroke="#000" stroke-width="0.12">y</text>
<text x="881.15" y="351.7" font-size="9.4" fill="#000" textLength="57.45" lengthAdjust="spacingAndGlyphs" stroke="#000" stroke-width="0.12">profundidad</text>
<text x="941.18" y="351.7" font-size="9.4" fill="#000" textLength="14.32" lengthAdjust="spacingAndGlyphs" stroke="#000" stroke-width="0.12">del</text>
<text x="958.08" y="351.7" font-size="9.4" fill="#000" textLength="41.0" lengthAdjust="spacingAndGlyphs" stroke="#000" stroke-width="0.12">grabado.</text>
<text x="782.5" y="375.2" font-size="9.4" fill="#000" textLength="8.68" lengthAdjust="spacingAndGlyphs" stroke="#000" stroke-width="0.12">4.</text>
<text x="794.24" y="375.2" font-size="9.4" fill="#000" textLength="25.07" lengthAdjust="spacingAndGlyphs" stroke="#000" stroke-width="0.12">Taller</text>
<text x="822.38" y="375.2" font-size="9.4" fill="#000" textLength="11.69" lengthAdjust="spacingAndGlyphs" stroke="#000" stroke-width="0.12">de</text>
<text x="837.14" y="375.2" font-size="9.4" fill="#000" textLength="28.1" lengthAdjust="spacingAndGlyphs" stroke="#000" stroke-width="0.12">resina</text>
<text x="868.3" y="375.2" font-size="9.4" fill="#000" textLength="35.28" lengthAdjust="spacingAndGlyphs" stroke="#000" stroke-width="0.12">epóxica</text>
<text x="906.65" y="375.2" font-size="9.4" fill="#000" textLength="3.5" lengthAdjust="spacingAndGlyphs" stroke="#000" stroke-width="0.12">-</text>
<text x="913.21" y="375.2" font-size="9.4" fill="#000" textLength="10.94" lengthAdjust="spacingAndGlyphs" stroke="#000" stroke-width="0.12">Se</text>
<text x="927.21" y="375.2" font-size="9.4" fill="#000" textLength="30.04" lengthAdjust="spacingAndGlyphs" stroke="#000" stroke-width="0.12">realiza</text>
<text x="960.32" y="375.2" font-size="9.4" fill="#000" textLength="8.31" lengthAdjust="spacingAndGlyphs" stroke="#000" stroke-width="0.12">el</text>
<text x="971.7" y="375.2" font-size="9.4" fill="#000" textLength="24.74" lengthAdjust="spacingAndGlyphs" stroke="#000" stroke-width="0.12">inicio</text>
<text x="999.5" y="375.2" font-size="9.4" fill="#000" textLength="14.32" lengthAdjust="spacingAndGlyphs" stroke="#000" stroke-width="0.12">del</text>
<text x="1016.88" y="375.2" font-size="9.4" fill="#000" textLength="24.08" lengthAdjust="spacingAndGlyphs" stroke="#000" stroke-width="0.12">taller</text>
<text x="1044.03" y="375.2" font-size="9.4" fill="#000" textLength="11.69" lengthAdjust="spacingAndGlyphs" stroke="#000" stroke-width="0.12">de</text>
<text x="1058.78" y="375.2" font-size="9.4" fill="#000" textLength="28.1" lengthAdjust="spacingAndGlyphs" stroke="#000" stroke-width="0.12">resina</text>
<text x="1089.94" y="375.2" font-size="9.4" fill="#000" textLength="35.28" lengthAdjust="spacingAndGlyphs" stroke="#000" stroke-width="0.12">epóxica</text>
<text x="1128.29" y="375.2" font-size="9.4" fill="#000" textLength="20.71" lengthAdjust="spacingAndGlyphs" stroke="#000" stroke-width="0.12">para</text>
<text x="1152.06" y="375.2" font-size="9.4" fill="#000" textLength="35.88" lengthAdjust="spacingAndGlyphs" stroke="#000" stroke-width="0.12">generar</text>
<text x="1191.0" y="375.2" font-size="9.4" fill="#000" textLength="33.2" lengthAdjust="spacingAndGlyphs" stroke="#000" stroke-width="0.12">nuevos</text>
<text x="782.5" y="390.3" font-size="9.4" fill="#000" textLength="82.53" lengthAdjust="spacingAndGlyphs" stroke="#000" stroke-width="0.12">emprendimientos</text>
<text x="868.74" y="390.3" font-size="9.4" fill="#000" textLength="6.03" lengthAdjust="spacingAndGlyphs" stroke="#000" stroke-width="0.12">o</text>
<text x="878.48" y="390.3" font-size="9.4" fill="#000" textLength="45.24" lengthAdjust="spacingAndGlyphs" stroke="#000" stroke-width="0.12">fortalecer</text>
<text x="927.43" y="390.3" font-size="9.4" fill="#000" textLength="8.31" lengthAdjust="spacingAndGlyphs" stroke="#000" stroke-width="0.12">el</text>
<text x="939.45" y="390.3" font-size="9.4" fill="#000" textLength="32.98" lengthAdjust="spacingAndGlyphs" stroke="#000" stroke-width="0.12">ámbito</text>
<text x="976.13" y="390.3" font-size="9.4" fill="#000" textLength="11.69" lengthAdjust="spacingAndGlyphs" stroke="#000" stroke-width="0.12">de</text>
<text x="991.54" y="390.3" font-size="9.4" fill="#000" textLength="8.1" lengthAdjust="spacingAndGlyphs" stroke="#000" stroke-width="0.12">la</text>
<text x="1003.34" y="390.3" font-size="9.4" fill="#000" textLength="22.41" lengthAdjust="spacingAndGlyphs" stroke="#000" stroke-width="0.12">línea</text>
<text x="1029.47" y="390.3" font-size="9.4" fill="#000" textLength="11.69" lengthAdjust="spacingAndGlyphs" stroke="#000" stroke-width="0.12">de</text>
<text x="1044.87" y="390.3" font-size="9.4" fill="#000" textLength="54.47" lengthAdjust="spacingAndGlyphs" stroke="#000" stroke-width="0.12">ebanistería,</text>
<text x="1103.04" y="390.3" font-size="9.4" fill="#000" textLength="10.16" lengthAdjust="spacingAndGlyphs" stroke="#000" stroke-width="0.12">se</text>
<text x="1116.91" y="390.3" font-size="9.4" fill="#000" textLength="11.48" lengthAdjust="spacingAndGlyphs" stroke="#000" stroke-width="0.12">da</text>
<text x="1132.1" y="390.3" font-size="9.4" fill="#000" textLength="17.49" lengthAdjust="spacingAndGlyphs" stroke="#000" stroke-width="0.12">una</text>
<text x="1153.29" y="390.3" font-size="9.4" fill="#000" textLength="40.21" lengthAdjust="spacingAndGlyphs" stroke="#000" stroke-width="0.12">apertura</text>
<text x="1197.21" y="390.3" font-size="9.4" fill="#000" textLength="11.69" lengthAdjust="spacingAndGlyphs" stroke="#000" stroke-width="0.12">de</text>
<text x="1212.61" y="390.3" font-size="9.4" fill="#000" textLength="11.59" lengthAdjust="spacingAndGlyphs" stroke="#000" stroke-width="0.12">40</text>
<text x="782.5" y="405.4" font-size="9.4" fill="#000" textLength="58.77" lengthAdjust="spacingAndGlyphs" stroke="#000" stroke-width="0.12">beneficiados</text>
<text x="844.72" y="405.4" font-size="9.4" fill="#000" textLength="29.73" lengthAdjust="spacingAndGlyphs" stroke="#000" stroke-width="0.12">donde</text>
<text x="877.9" y="405.4" font-size="9.4" fill="#000" textLength="39.14" lengthAdjust="spacingAndGlyphs" stroke="#000" stroke-width="0.12">tuvieron</text>
<text x="920.5" y="405.4" font-size="9.4" fill="#000" textLength="8.31" lengthAdjust="spacingAndGlyphs" stroke="#000" stroke-width="0.12">el</text>
<text x="932.26" y="405.4" font-size="9.4" fill="#000" textLength="63.34" lengthAdjust="spacingAndGlyphs" stroke="#000" stroke-width="0.12">conocimiento</text>
<text x="999.05" y="405.4" font-size="9.4" fill="#000" textLength="11.69" lengthAdjust="spacingAndGlyphs" stroke="#000" stroke-width="0.12">de</text>
<text x="1014.19" y="405.4" font-size="9.4" fill="#000" textLength="8.1" lengthAdjust="spacingAndGlyphs" stroke="#000" stroke-width="0.12">la</text>
<text x="1025.74" y="405.4" font-size="9.4" fill="#000" textLength="24.86" lengthAdjust="spacingAndGlyphs" stroke="#000" stroke-width="0.12">parte</text>
<text x="1054.05" y="405.4" font-size="9.4" fill="#000" textLength="32.24" lengthAdjust="spacingAndGlyphs" stroke="#000" stroke-width="0.12">teórica</text>
<text x="1089.75" y="405.4" font-size="9.4" fill="#000" textLength="5.17" lengthAdjust="spacingAndGlyphs" stroke="#000" stroke-width="0.12">y</text>
<text x="1098.37" y="405.4" font-size="9.4" fill="#000" textLength="25.65" lengthAdjust="spacingAndGlyphs" stroke="#000" stroke-width="0.12">luego</text>
<text x="1127.47" y="405.4" font-size="9.4" fill="#000" textLength="8.1" lengthAdjust="spacingAndGlyphs" stroke="#000" stroke-width="0.12">la</text>
<text x="1139.02" y="405.4" font-size="9.4" fill="#000" textLength="24.86" lengthAdjust="spacingAndGlyphs" stroke="#000" stroke-width="0.12">parte</text>
<text x="1167.33" y="405.4" font-size="9.4" fill="#000" textLength="36.65" lengthAdjust="spacingAndGlyphs" stroke="#000" stroke-width="0.12">práctica</text>
<text x="1207.43" y="405.4" font-size="9.4" fill="#000" textLength="16.77" lengthAdjust="spacingAndGlyphs" stroke="#000" stroke-width="0.12">con</text>
<text x="782.5" y="420.6" font-size="9.4" fill="#000" textLength="33.94" lengthAdjust="spacingAndGlyphs" stroke="#000" stroke-width="0.12">moldes</text>
<text x="819.2" y="466.9" font-size="9.4" fill="#000" textLength="8.68" lengthAdjust="spacingAndGlyphs" stroke="#000" stroke-width="0.12">1.</text>
<text x="830.46" y="466.9" font-size="9.4" fill="#000" textLength="15.3" lengthAdjust="spacingAndGlyphs" stroke="#000" stroke-width="0.12">Los</text>
<text x="848.35" y="466.9" font-size="9.4" fill="#000" textLength="45.3" lengthAdjust="spacingAndGlyphs" stroke="#000" stroke-width="0.12">artesanos</text>
<text x="896.24" y="466.9" font-size="9.4" fill="#000" textLength="5.17" lengthAdjust="spacingAndGlyphs" stroke="#000" stroke-width="0.12">y</text>
<text x="903.99" y="466.9" font-size="9.4" fill="#000" textLength="74.07" lengthAdjust="spacingAndGlyphs" stroke="#000" stroke-width="0.12">emprendedores</text>
<text x="980.64" y="466.9" font-size="9.4" fill="#000" textLength="39.09" lengthAdjust="spacingAndGlyphs" stroke="#000" stroke-width="0.12">lograron</text>
<text x="1022.32" y="466.9" font-size="9.4" fill="#000" textLength="37.05" lengthAdjust="spacingAndGlyphs" stroke="#000" stroke-width="0.12">obtener</text>
<text x="1061.95" y="466.9" font-size="9.4" fill="#000" textLength="30.27" lengthAdjust="spacingAndGlyphs" stroke="#000" stroke-width="0.12">ventas</text>
<text x="1094.81" y="466.9" font-size="9.4" fill="#000" textLength="11.69" lengthAdjust="spacingAndGlyphs" stroke="#000" stroke-width="0.12">en</text>
<text x="1109.09" y="466.9" font-size="9.4" fill="#000" textLength="12.57" lengthAdjust="spacingAndGlyphs" stroke="#000" stroke-width="0.12">las</text>
<text x="1124.24" y="466.9" font-size="9.4" fill="#000" textLength="46.8" lengthAdjust="spacingAndGlyphs" stroke="#000" stroke-width="0.12">diferentes</text>
<text x="782.5" y="482.6" font-size="9.4" fill="#000" textLength="59.24" lengthAdjust="spacingAndGlyphs" stroke="#000" stroke-width="0.12">exposiciones</text>
<text x="844.32" y="482.6" font-size="9.4" fill="#000" textLength="5.17" lengthAdjust="spacingAndGlyphs" stroke="#000" stroke-width="0.12">y</text>
<text x="852.08" y="482.6" font-size="9.4" fill="#000" textLength="28.3" lengthAdjust="spacingAndGlyphs" stroke="#000" stroke-width="0.12">ferias,</text>
<text x="882.96" y="482.6" font-size="9.4" fill="#000" textLength="34.51" lengthAdjust="spacingAndGlyphs" stroke="#000" stroke-width="0.12">realizas</text>
<text x="920.06" y="482.6" font-size="9.4" fill="#000" textLength="31.25" lengthAdjust="spacingAndGlyphs" stroke="#000" stroke-width="0.12">dentro</text>
<text x="953.89" y="482.6" font-size="9.4" fill="#000" textLength="5.17" lengthAdjust="spacingAndGlyphs" stroke="#000" stroke-width="0.12">y</text>
<text x="961.65" y="482.6" font-size="9.4" fill="#000" textLength="24.41" lengthAdjust="spacingAndGlyphs" stroke="#000" stroke-width="0.12">fuera</text>
<text x="988.64" y="482.6" font-size="9.4" fill="#000" textLength="11.69" lengthAdjust="spacingAndGlyphs" stroke="#000" stroke-width="0.12">de</text>
<text x="1002.91" y="482.6" font-size="9.4" fill="#000" textLength="8.1" lengthAdjust="spacingAndGlyphs" stroke="#000" stroke-width="0.12">la</text>
<text x="1013.6" y="482.6" font-size="9.4" fill="#000" textLength="48.51" lengthAdjust="spacingAndGlyphs" stroke="#000" stroke-width="0.12">población.</text>
<text x="819.2" y="505.6" font-size="9.4" fill="#000" textLength="8.68" lengthAdjust="spacingAndGlyphs" stroke="#000" stroke-width="0.12">2.</text>
<text x="830.46" y="505.6" font-size="9.4" fill="#000" textLength="15.3" lengthAdjust="spacingAndGlyphs" stroke="#000" stroke-width="0.12">Los</text>
<text x="848.35" y="505.6" font-size="9.4" fill="#000" textLength="34.09" lengthAdjust="spacingAndGlyphs" stroke="#000" stroke-width="0.12">talleres</text>
<text x="885.02" y="505.6" font-size="9.4" fill="#000" textLength="11.69" lengthAdjust="spacingAndGlyphs" stroke="#000" stroke-width="0.12">de</text>
<text x="899.3" y="505.6" font-size="9.4" fill="#000" textLength="82.53" lengthAdjust="spacingAndGlyphs" stroke="#000" stroke-width="0.12">emprendimientos</text>
<text x="984.42" y="505.6" font-size="9.4" fill="#000" textLength="49.45" lengthAdjust="spacingAndGlyphs" stroke="#000" stroke-width="0.12">brindados,</text>
<text x="1036.45" y="505.6" font-size="9.4" fill="#000" textLength="39.83" lengthAdjust="spacingAndGlyphs" stroke="#000" stroke-width="0.12">permitió</text>
<text x="1078.87" y="505.6" font-size="9.4" fill="#000" textLength="17.7" lengthAdjust="spacingAndGlyphs" stroke="#000" stroke-width="0.12">que</text>
<text x="1099.15" y="505.6" font-size="9.4" fill="#000" textLength="35.43" lengthAdjust="spacingAndGlyphs" stroke="#000" stroke-width="0.12">algunas</text>
<text x="1137.17" y="505.6" font-size="9.4" fill="#000" textLength="35.69" lengthAdjust="spacingAndGlyphs" stroke="#000" stroke-width="0.12">familias</text>
<text x="1175.43" y="505.6" font-size="9.4" fill="#000" textLength="10.16" lengthAdjust="spacingAndGlyphs" stroke="#000" stroke-width="0.12">se</text>
<text x="782.5" y="520.8" font-size="9.4" fill="#000" textLength="44.02" lengthAdjust="spacingAndGlyphs" stroke="#000" stroke-width="0.12">dediquen</text>
<text x="829.11" y="520.8" font-size="9.4" fill="#000" textLength="5.47" lengthAdjust="spacingAndGlyphs" stroke="#000" stroke-width="0.12">a</text>
<text x="837.17" y="520.8" font-size="9.4" fill="#000" textLength="20.1" lengthAdjust="spacingAndGlyphs" stroke="#000" stroke-width="0.12">esas</text>
<text x="859.85" y="520.8" font-size="9.4" fill="#000" textLength="52.1" lengthAdjust="spacingAndGlyphs" stroke="#000" stroke-width="0.12">actividades</text>
<text x="914.54" y="520.8" font-size="9.4" fill="#000" textLength="25.92" lengthAdjust="spacingAndGlyphs" stroke="#000" stroke-width="0.12">como</text>
<text x="943.05" y="520.8" font-size="9.4" fill="#000" textLength="11.69" lengthAdjust="spacingAndGlyphs" stroke="#000" stroke-width="0.12">de</text>
<text x="957.33" y="520.8" font-size="9.4" fill="#000" textLength="55.86" lengthAdjust="spacingAndGlyphs" stroke="#000" stroke-width="0.12">panificación</text>
<text x="1015.77" y="520.8" font-size="9.4" fill="#000" textLength="5.17" lengthAdjust="spacingAndGlyphs" stroke="#000" stroke-width="0.12">y</text>
<text x="1023.53" y="520.8" font-size="9.4" fill="#000" textLength="48.72" lengthAdjust="spacingAndGlyphs" stroke="#000" stroke-width="0.12">soldadura.</text>
<text x="782.5" y="567.6" font-size="9.4" fill="#000" textLength="24.51" lengthAdjust="spacingAndGlyphs" stroke="#000" stroke-width="0.12">Parte</text>
<text x="809.6" y="567.6" font-size="9.4" fill="#000" textLength="5.79" lengthAdjust="spacingAndGlyphs" stroke="#000" stroke-width="0.12">3</text>
<text x="817.97" y="567.6" font-size="9.4" fill="#000" textLength="57.46" lengthAdjust="spacingAndGlyphs" stroke="#000" stroke-width="0.12">atribuciones</text>
<text x="782" y="590.8" font-size="10.8" fill="#111" textLength="16.96" lengthAdjust="spacingAndGlyphs" stroke="#000" stroke-width="0.12">Art.</text>
<text x="801.99" y="590.8" font-size="10.8" fill="#111" textLength="15.15" lengthAdjust="spacingAndGlyphs" stroke="#000" stroke-width="0.12">68.</text>
<text x="820.17" y="590.8" font-size="10.8" fill="#111" textLength="9.69" lengthAdjust="spacingAndGlyphs" stroke="#000" stroke-width="0.12">a)</text>
<text x="832.89" y="590.8" font-size="10.8" fill="#111" textLength="45.44" lengthAdjust="spacingAndGlyphs" stroke="#000" stroke-width="0.12">Intervenir</text>
<text x="881.35" y="590.8" font-size="10.8" fill="#111" textLength="17.57" lengthAdjust="spacingAndGlyphs" stroke="#000" stroke-width="0.12">con</text>
<text x="901.95" y="590.8" font-size="10.8" fill="#111" textLength="16.96" lengthAdjust="spacingAndGlyphs" stroke="#000" stroke-width="0.12">voz</text>
<text x="921.94" y="590.8" font-size="10.8" fill="#111" textLength="5.45" lengthAdjust="spacingAndGlyphs" stroke="#000" stroke-width="0.12">y</text>
<text x="930.42" y="590.8" font-size="10.8" fill="#111" textLength="20.6" lengthAdjust="spacingAndGlyphs" stroke="#000" stroke-width="0.12">voto</text>
<text x="954.05" y="590.8" font-size="10.8" fill="#111" textLength="12.12" lengthAdjust="spacingAndGlyphs" stroke="#000" stroke-width="0.12">en</text>
<text x="969.21" y="590.8" font-size="10.8" fill="#111" textLength="13.93" lengthAdjust="spacingAndGlyphs" stroke="#000" stroke-width="0.12">las</text>
<text x="986.17" y="590.8" font-size="10.8" fill="#111" textLength="43.02" lengthAdjust="spacingAndGlyphs" stroke="#000" stroke-width="0.12">sesiones</text>
<text x="1032.22" y="590.8" font-size="10.8" fill="#111" textLength="5.45" lengthAdjust="spacingAndGlyphs" stroke="#000" stroke-width="0.12">y</text>
<text x="1040.69" y="590.8" font-size="10.8" fill="#111" textLength="70.29" lengthAdjust="spacingAndGlyphs" stroke="#000" stroke-width="0.12">deliberaciones</text>
<text x="1114.01" y="590.8" font-size="10.8" fill="#111" textLength="12.12" lengthAdjust="spacingAndGlyphs" stroke="#000" stroke-width="0.12">de</text>
<text x="1129.17" y="590.8" font-size="10.8" fill="#111" textLength="8.48" lengthAdjust="spacingAndGlyphs" stroke="#000" stroke-width="0.12">la</text>
<text x="1140.68" y="590.8" font-size="10.8" fill="#111" textLength="23.64" lengthAdjust="spacingAndGlyphs" stroke="#000" stroke-width="0.12">junta</text>
<text x="1167.34" y="590.8" font-size="10.8" fill="#111" textLength="48.48" lengthAdjust="spacingAndGlyphs" stroke="#000" stroke-width="0.12">parroquial</text>
<text x="782" y="604.2" font-size="10.8" fill="#111" textLength="24.83" lengthAdjust="spacingAndGlyphs" stroke="#000" stroke-width="0.12">rural;</text>
<rect x="781.5" y="616.5" width="443" height="112.5" fill="none" stroke="#000" stroke-width="1.1"/>
<line x1="929.5" y1="617" x2="929.5" y2="729" stroke="#000" stroke-width="1" />
<line x1="1076.5" y1="617" x2="1076.5" y2="729" stroke="#000" stroke-width="1" />
<text x="788.5" y="627.6" font-size="10.8" fill="#111" textLength="13.33" lengthAdjust="spacingAndGlyphs" stroke="#000" stroke-width="0.12">Se</text>
<text x="804.86" y="627.6" font-size="10.8" fill="#111" textLength="32.11" lengthAdjust="spacingAndGlyphs" stroke="#000" stroke-width="0.12">estuvo</text>
<text x="840.0" y="627.6" font-size="10.8" fill="#111" textLength="42.42" lengthAdjust="spacingAndGlyphs" stroke="#000" stroke-width="0.12">presente</text>
<text x="885.45" y="627.6" font-size="10.8" fill="#111" textLength="12.12" lengthAdjust="spacingAndGlyphs" stroke="#000" stroke-width="0.12">en</text>
<text x="788.5" y="640.16" font-size="10.8" fill="#111" textLength="26.66" lengthAdjust="spacingAndGlyphs" stroke="#000" stroke-width="0.12">todas</text>
<text x="818.19" y="640.16" font-size="10.8" fill="#111" textLength="13.93" lengthAdjust="spacingAndGlyphs" stroke="#000" stroke-width="0.12">las</text>
<text x="835.16" y="640.16" font-size="10.8" fill="#111" textLength="70.28" lengthAdjust="spacingAndGlyphs" stroke="#000" stroke-width="0.12">convocatorias,</text>
<text x="908.46" y="640.16" font-size="10.8" fill="#111" textLength="12.12" lengthAdjust="spacingAndGlyphs" stroke="#000" stroke-width="0.12">27</text>
<text x="788.5" y="652.72" font-size="10.8" fill="#111" textLength="47.86" lengthAdjust="spacingAndGlyphs" stroke="#000" stroke-width="0.12">ordinarias</text>
<text x="839.39" y="652.72" font-size="10.8" fill="#111" textLength="5.45" lengthAdjust="spacingAndGlyphs" stroke="#000" stroke-width="0.12">y</text>
<text x="847.87" y="652.72" font-size="10.8" fill="#111" textLength="6.06" lengthAdjust="spacingAndGlyphs" stroke="#000" stroke-width="0.12">5</text>
<text x="788.5" y="665.28" font-size="10.8" fill="#111" textLength="75.12" lengthAdjust="spacingAndGlyphs" stroke="#000" stroke-width="0.12">extraordinarias,</text>
<text x="866.65" y="665.28" font-size="10.8" fill="#111" textLength="17.57" lengthAdjust="spacingAndGlyphs" stroke="#000" stroke-width="0.12">con</text>
<text x="788.5" y="677.84" font-size="10.8" fill="#111" textLength="39.99" lengthAdjust="spacingAndGlyphs" stroke="#000" stroke-width="0.12">facilidad</text>
<text x="831.52" y="677.84" font-size="10.8" fill="#111" textLength="12.12" lengthAdjust="spacingAndGlyphs" stroke="#000" stroke-width="0.12">de</text>
<text x="846.67" y="677.84" font-size="10.8" fill="#111" textLength="16.96" lengthAdjust="spacingAndGlyphs" stroke="#000" stroke-width="0.12">voz</text>
<text x="866.66" y="677.84" font-size="10.8" fill="#111" textLength="5.45" lengthAdjust="spacingAndGlyphs" stroke="#000" stroke-width="0.12">y</text>
<text x="875.14" y="677.84" font-size="10.8" fill="#111" textLength="26.05" lengthAdjust="spacingAndGlyphs" stroke="#000" stroke-width="0.12">votos</text>
<text x="904.22" y="677.84" font-size="10.8" fill="#111" textLength="12.12" lengthAdjust="spacingAndGlyphs" stroke="#000" stroke-width="0.12">en</text>
<text x="788.5" y="690.4" font-size="10.8" fill="#111" textLength="13.93" lengthAdjust="spacingAndGlyphs" stroke="#000" stroke-width="0.12">los</text>
<text x="805.46" y="690.4" font-size="10.8" fill="#111" textLength="29.68" lengthAdjust="spacingAndGlyphs" stroke="#000" stroke-width="0.12">temas</text>
<text x="838.17" y="690.4" font-size="10.8" fill="#111" textLength="39.38" lengthAdjust="spacingAndGlyphs" stroke="#000" stroke-width="0.12">tratados</text>
<text x="880.59" y="690.4" font-size="10.8" fill="#111" textLength="21.82" lengthAdjust="spacingAndGlyphs" stroke="#000" stroke-width="0.12">para</text>
<text x="788.5" y="702.96" font-size="10.8" fill="#111" textLength="20.61" lengthAdjust="spacingAndGlyphs" stroke="#000" stroke-width="0.12">bien</text>
<text x="812.14" y="702.96" font-size="10.8" fill="#111" textLength="12.12" lengthAdjust="spacingAndGlyphs" stroke="#000" stroke-width="0.12">de</text>
<text x="827.29" y="702.96" font-size="10.8" fill="#111" textLength="8.48" lengthAdjust="spacingAndGlyphs" stroke="#000" stroke-width="0.12">la</text>
<text x="838.8" y="702.96" font-size="10.8" fill="#111" textLength="56.36" lengthAdjust="spacingAndGlyphs" stroke="#000" stroke-width="0.12">ciudadanía.</text>
<text x="935" y="627.6" font-size="10.8" fill="#111" textLength="13.33" lengthAdjust="spacingAndGlyphs" stroke="#000" stroke-width="0.12">Se</text>
<text x="951.36" y="627.6" font-size="10.8" fill="#111" textLength="35.14" lengthAdjust="spacingAndGlyphs" stroke="#000" stroke-width="0.12">cumple</text>
<text x="989.53" y="627.6" font-size="10.8" fill="#111" textLength="17.57" lengthAdjust="spacingAndGlyphs" stroke="#000" stroke-width="0.12">con</text>
<text x="1010.13" y="627.6" font-size="10.8" fill="#111" textLength="13.93" lengthAdjust="spacingAndGlyphs" stroke="#000" stroke-width="0.12">los</text>
<text x="935" y="640.16" font-size="10.8" fill="#111" textLength="72.1" lengthAdjust="spacingAndGlyphs" stroke="#000" stroke-width="0.12">requerimientos</text>
<text x="1010.12" y="640.16" font-size="10.8" fill="#111" textLength="60.59" lengthAdjust="spacingAndGlyphs" stroke="#000" stroke-width="0.12">establecidos</text>
<text x="935" y="652.72" font-size="10.8" fill="#111" textLength="12.12" lengthAdjust="spacingAndGlyphs" stroke="#000" stroke-width="0.12">en</text>
<text x="950.15" y="652.72" font-size="10.8" fill="#111" textLength="8.48" lengthAdjust="spacingAndGlyphs" stroke="#000" stroke-width="0.12">la</text>
<text x="961.66" y="652.72" font-size="10.8" fill="#111" textLength="13.93" lengthAdjust="spacingAndGlyphs" stroke="#000" stroke-width="0.12">ley</text>
<text x="978.63" y="652.72" font-size="10.8" fill="#111" textLength="17.57" lengthAdjust="spacingAndGlyphs" stroke="#000" stroke-width="0.12">con</text>
<text x="999.23" y="652.72" font-size="10.8" fill="#111" textLength="13.93" lengthAdjust="spacingAndGlyphs" stroke="#000" stroke-width="0.12">las</text>
<text x="1016.19" y="652.72" font-size="10.8" fill="#111" textLength="43.02" lengthAdjust="spacingAndGlyphs" stroke="#000" stroke-width="0.12">sesiones</text>
<text x="935" y="665.28" font-size="10.8" fill="#111" textLength="47.86" lengthAdjust="spacingAndGlyphs" stroke="#000" stroke-width="0.12">ordinarias</text>
<text x="985.89" y="665.28" font-size="10.8" fill="#111" textLength="71.49" lengthAdjust="spacingAndGlyphs" stroke="#000" stroke-width="0.12">mensualmente</text>
<text x="1060.41" y="665.28" font-size="10.8" fill="#111" textLength="5.45" lengthAdjust="spacingAndGlyphs" stroke="#000" stroke-width="0.12">y</text>
<text x="935" y="677.84" font-size="10.8" fill="#111" textLength="72.1" lengthAdjust="spacingAndGlyphs" stroke="#000" stroke-width="0.12">extraordinarias</text>
<text x="1010.12" y="677.84" font-size="10.8" fill="#111" textLength="12.12" lengthAdjust="spacingAndGlyphs" stroke="#000" stroke-width="0.12">en</text>
<text x="935" y="690.4" font-size="10.8" fill="#111" textLength="54.53" lengthAdjust="spacingAndGlyphs" stroke="#000" stroke-width="0.12">situaciones</text>
<text x="992.56" y="690.4" font-size="10.8" fill="#111" textLength="12.12" lengthAdjust="spacingAndGlyphs" stroke="#000" stroke-width="0.12">de</text>
<text x="1007.71" y="690.4" font-size="10.8" fill="#111" textLength="24.23" lengthAdjust="spacingAndGlyphs" stroke="#000" stroke-width="0.12">toma</text>
<text x="935" y="702.96" font-size="10.8" fill="#111" textLength="54.53" lengthAdjust="spacingAndGlyphs" stroke="#000" stroke-width="0.12">decisiones,</text>
<text x="992.56" y="702.96" font-size="10.8" fill="#111" textLength="38.77" lengthAdjust="spacingAndGlyphs" stroke="#000" stroke-width="0.12">siempre</text>
<text x="935" y="715.52" font-size="10.8" fill="#111" textLength="47.27" lengthAdjust="spacingAndGlyphs" stroke="#000" stroke-width="0.12">buscando</text>
<text x="985.3" y="715.52" font-size="10.8" fill="#111" textLength="8.48" lengthAdjust="spacingAndGlyphs" stroke="#000" stroke-width="0.12">el</text>
<text x="996.81" y="715.52" font-size="10.8" fill="#111" textLength="44.84" lengthAdjust="spacingAndGlyphs" stroke="#000" stroke-width="0.12">bienestar</text>
<text x="935" y="728.08" font-size="10.8" fill="#111" textLength="53.33" lengthAdjust="spacingAndGlyphs" stroke="#000" stroke-width="0.12">ciudadano.</text>
<text x="1083.2" y="627.6" font-size="10.8" fill="#111" textLength="13.33" lengthAdjust="spacingAndGlyphs" stroke="#000" stroke-width="0.12">En</text>
<text x="1099.56" y="627.6" font-size="10.8" fill="#111" textLength="18.19" lengthAdjust="spacingAndGlyphs" stroke="#000" stroke-width="0.12">que</text>
<text x="1120.78" y="627.6" font-size="10.8" fill="#111" textLength="11.51" lengthAdjust="spacingAndGlyphs" stroke="#000" stroke-width="0.12">se</text>
<text x="1135.32" y="627.6" font-size="10.8" fill="#111" textLength="20.59" lengthAdjust="spacingAndGlyphs" stroke="#000" stroke-width="0.12">mas</text>
<text x="1158.94" y="627.6" font-size="10.8" fill="#111" textLength="41.81" lengthAdjust="spacingAndGlyphs" stroke="#000" stroke-width="0.12">concreto</text>
<text x="1203.77" y="627.6" font-size="10.8" fill="#111" textLength="12.12" lengthAdjust="spacingAndGlyphs" stroke="#000" stroke-width="0.12">en</text>
<text x="1083.2" y="640.16" font-size="10.8" fill="#111" textLength="8.48" lengthAdjust="spacingAndGlyphs" stroke="#000" stroke-width="0.12">el</text>
<text x="1094.71" y="640.16" font-size="10.8" fill="#111" textLength="45.44" lengthAdjust="spacingAndGlyphs" stroke="#000" stroke-width="0.12">momento</text>
<text x="1143.18" y="640.16" font-size="10.8" fill="#111" textLength="12.12" lengthAdjust="spacingAndGlyphs" stroke="#000" stroke-width="0.12">de</text>
<text x="1158.33" y="640.16" font-size="10.8" fill="#111" textLength="43.63" lengthAdjust="spacingAndGlyphs" stroke="#000" stroke-width="0.12">votación,</text>
<text x="1204.98" y="640.16" font-size="10.8" fill="#111" textLength="13.93" lengthAdjust="spacingAndGlyphs" stroke="#000" stroke-width="0.12">sin</text>
<text x="1083.2" y="652.72" font-size="10.8" fill="#111" textLength="32.72" lengthAdjust="spacingAndGlyphs" stroke="#000" stroke-width="0.12">mucho</text>
<text x="1118.94" y="652.72" font-size="10.8" fill="#111" textLength="55.14" lengthAdjust="spacingAndGlyphs" stroke="#000" stroke-width="0.12">argumento,</text>
<text x="1177.11" y="652.72" font-size="10.8" fill="#111" textLength="11.51" lengthAdjust="spacingAndGlyphs" stroke="#000" stroke-width="0.12">ya</text>
<text x="1191.65" y="652.72" font-size="10.8" fill="#111" textLength="18.19" lengthAdjust="spacingAndGlyphs" stroke="#000" stroke-width="0.12">que</text>
<text x="1083.2" y="665.28" font-size="10.8" fill="#111" textLength="28.47" lengthAdjust="spacingAndGlyphs" stroke="#000" stroke-width="0.12">existe</text>
<text x="1114.7" y="665.28" font-size="10.8" fill="#111" textLength="12.12" lengthAdjust="spacingAndGlyphs" stroke="#000" stroke-width="0.12">un</text>
<text x="1129.86" y="665.28" font-size="10.8" fill="#111" textLength="37.57" lengthAdjust="spacingAndGlyphs" stroke="#000" stroke-width="0.12">espacio</text>
<text x="1170.45" y="665.28" font-size="10.8" fill="#111" textLength="21.82" lengthAdjust="spacingAndGlyphs" stroke="#000" stroke-width="0.12">para</text>
<text x="1083.2" y="677.84" font-size="10.8" fill="#111" textLength="44.84" lengthAdjust="spacingAndGlyphs" stroke="#000" stroke-width="0.12">deliberar.</text>
<line x1="1135.3157953125" y1="630.5" x2="1155.90776875" y2="630.5" stroke="#2b579a" stroke-width="1" />
<rect x="1350" y="187" width="15" height="558" fill="#dadada" />
<rect x="1350.5" y="187.5" width="14" height="14" fill="#fff" stroke="#b0b0b0"/>
<path d="M1353.5 198 L1357.5 193.5 L1361.5 198 Z" stroke="none" fill="#606060" stroke-width="1" />
<rect x="1350.5" y="202.5" width="14" height="108.5" fill="#fff" stroke="#b0b0b0"/>
<rect x="1350.5" y="728.5" width="14" height="14" fill="#fff" stroke="#b0b0b0"/>
<path d="M1353.5 733.5 L1357.5 738 L1361.5 733.5 Z" stroke="none" fill="#606060" stroke-width="1" />
<path d="M1299.5 560.5 H1339.5 V571 L1348 580 L1339.5 589 V600 H1299.5 Z" fill="#fff" stroke="#2f4f87" stroke-width="1.1" filter="url(#sh)"/>
<path d="M1314.5 572.5 H1322.5 V587 L1318.5 583.5 L1314.5 587 Z" stroke="#333" fill="none" stroke-width="1" />
<rect x="0" y="745" width="1366" height="23" fill="#f3f2f1" />
<line x1="0" y1="745.5" x2="1366" y2="745.5" stroke="#d6d6d6" stroke-width="1" />
<text x="8.2" y="759.8" font-size="11.6" fill="#454545" textLength="68.7" lengthAdjust="spacingAndGlyphs" >Página 1 de 6</text>
<text x="96" y="759.8" font-size="11.6" fill="#454545" textLength="70.5" lengthAdjust="spacingAndGlyphs" >1792 palabras</text>
<path d="M193.5 750.5 H186.5 V761.5 H192.5 M193.5 750.5 V755" stroke="#454545" fill="none" stroke-width="1" />
<path d="M193.5 756 L199.5 763 M199.5 756 L193.5 763" stroke="#454545" fill="none" stroke-width="1" />
<text x="218.5" y="759.8" font-size="11.6" fill="#454545" textLength="121.2" lengthAdjust="spacingAndGlyphs" >Español (América latina)</text>
<path d="M968.5 753 V749.5 H971.5 M968.5 759 V762.5 H971.5 M978.5 749.5 H981.5 V753 M981.5 759 V762.5 H978.5" stroke="#454545" fill="none" stroke-width="1" />
<path d="M971.5 751.5 H976 L978.5 754 V760.5 H971.5 Z" stroke="#454545" fill="none" stroke-width="1" />
<text x="985.7" y="760.3" font-size="11.6" fill="#454545" textLength="73.7" lengthAdjust="spacingAndGlyphs" >Concentración</text>
<path d="M1085.5 750.5 H1091.5 V761.5 H1085.5 Z M1091.5 750.5 H1097.5 V761.5 H1091.5 Z" stroke="#454545" fill="none" stroke-width="1" />
<line x1="1087" y1="753" x2="1090" y2="753" stroke="#454545" stroke-width="0.9" />
<line x1="1093" y1="753" x2="1096" y2="753" stroke="#454545" stroke-width="0.9" />
<line x1="1087" y1="755.5" x2="1090" y2="755.5" stroke="#454545" stroke-width="0.9" />
<line x1="1093" y1="755.5" x2="1096" y2="755.5" stroke="#454545" stroke-width="0.9" />
<line x1="1087" y1="758" x2="1090" y2="758" stroke="#454545" stroke-width="0.9" />
<line x1="1093" y1="758" x2="1096" y2="758" stroke="#454545" stroke-width="0.9" />
<rect x="1112" y="746" width="40" height="22" fill="#d2d0ce" />
<rect x="1126.5" y="749.5" width="10" height="13.5" fill="none" stroke="#454545"/>
<line x1="1128.5" y1="752.0" x2="1134.5" y2="752.0" stroke="#454545" stroke-width="0.9" />
<line x1="1128.5" y1="754.2" x2="1134.5" y2="754.2" stroke="#454545" stroke-width="0.9" />
<line x1="1128.5" y1="756.4" x2="1134.5" y2="756.4" stroke="#454545" stroke-width="0.9" />
<line x1="1128.5" y1="758.6" x2="1134.5" y2="758.6" stroke="#454545" stroke-width="0.9" />
<line x1="1128.5" y1="760.8" x2="1134.5" y2="760.8" stroke="#454545" stroke-width="0.9" />
<path d="M1175.5 754 V749.5 H1165.5 V762.5 H1171" stroke="#454545" fill="none" stroke-width="1" />
<line x1="1167.5" y1="752" x2="1173.5" y2="752" stroke="#454545" stroke-width="0.9" />
<line x1="1167.5" y1="754.5" x2="1173.5" y2="754.5" stroke="#454545" stroke-width="0.9" />
<line x1="1167.5" y1="757" x2="1173.5" y2="757" stroke="#454545" stroke-width="0.9" />
<circle cx="1174.5" cy="759.5" r="4" fill="#454545"/>
<circle cx="1174.5" cy="759.5" r="2.8" fill="none" stroke="#f3f2f1" stroke-width="0.8"/>
<line x1="1171.5" y1="759.5" x2="1177.5" y2="759.5" stroke="#f3f2f1" stroke-width="0.8" />
<line x1="1174.5" y1="756.5" x2="1174.5" y2="762.5" stroke="#f3f2f1" stroke-width="0.8" />
<line x1="1198" y1="755.5" x2="1206" y2="755.5" stroke="#454545" stroke-width="1.6" />
<line x1="1211" y1="756.5" x2="1311" y2="756.5" stroke="#9a9a9a" stroke-width="1" />
<rect x="1247" y="751" width="5" height="11" fill="#6e6e6e" />
<line x1="1261.5" y1="754" x2="1261.5" y2="759" stroke="#9a9a9a" stroke-width="1" />
<path d="M1316 755.5 H1324 M1320 751.5 V759.5" stroke="#454545" fill="none" stroke-width="1.3" />
<text x="1337.5" y="759.7" font-size="11.6" fill="#454545" textLength="20" lengthAdjust="spacingAndGlyphs" >78%</text>
</svg></body></html>
